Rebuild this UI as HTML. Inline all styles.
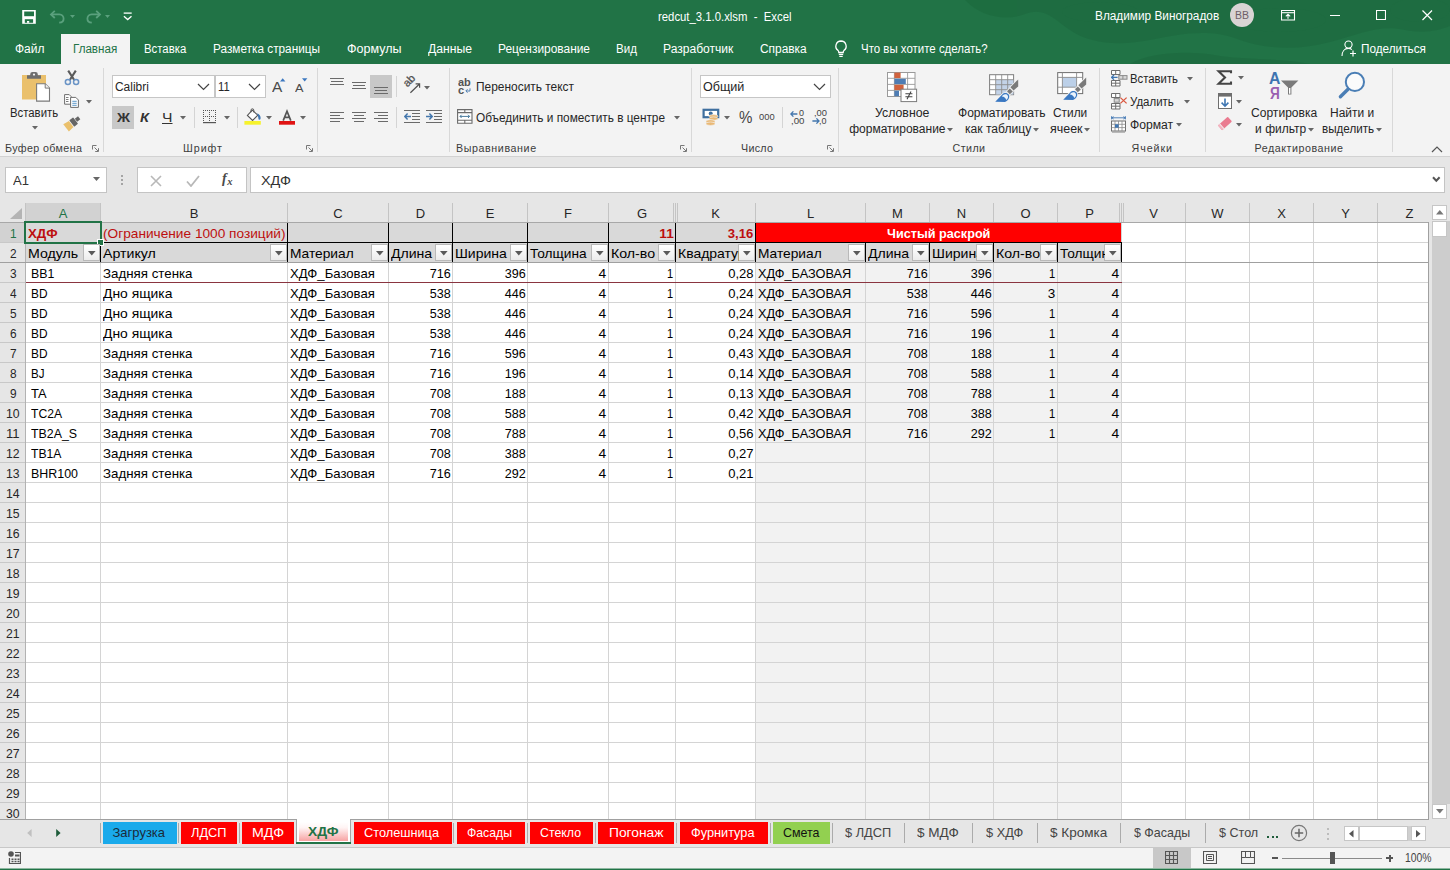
<!DOCTYPE html>
<html><head><meta charset="utf-8"><title>redcut_3.1.0.xlsm - Excel</title>
<style>
html,body{margin:0;padding:0;background:#fff;}
body{width:1450px;height:870px;overflow:hidden;position:relative;font-family:"Liberation Sans",sans-serif;}
#app{position:absolute;left:0;top:0;width:1450px;height:870px;overflow:hidden;background:#e6e6e6;}
#app div,#app svg,#app span.t{position:absolute;}
span.t{white-space:pre;}
</style></head><body><div id="app">
<div style="left:0px;top:0px;width:1450px;height:64px;background:#217346;"></div>
<svg style="left:950px;top:0" width="500" height="64" viewBox="0 0 500 64"><g fill="#1c673d" opacity="0.55"><path d="M15 0C30 16 55 22 75 14C95 6 105 20 120 30C140 44 170 46 200 40C230 34 260 28 290 40C320 50 350 50 380 42C410 34 430 24 455 30C475 34 490 30 500 26V0z"/><ellipse cx="150" cy="12" rx="38" ry="10"/><ellipse cx="330" cy="20" rx="46" ry="12"/><ellipse cx="470" cy="10" rx="30" ry="12"/><path d="M180 64C200 52 240 50 270 56C300 60 330 58 360 64z"/></g></svg>
<div style="left:61px;top:34px;width:69px;height:30px;background:#f3f3f3;"></div>
<div style="left:0px;top:64px;width:1450px;height:92px;background:#f3f3f3;"></div>
<div style="left:0px;top:156px;width:1450px;height:1px;background:#d2d2d2;"></div>
<div style="left:0px;top:157px;width:1450px;height:46px;background:#e6e6e6;"></div>
<div style="left:103px;top:68px;width:1px;height:84px;background:#d8d8d8;"></div>
<div style="left:317px;top:68px;width:1px;height:84px;background:#d8d8d8;"></div>
<div style="left:449px;top:68px;width:1px;height:84px;background:#d8d8d8;"></div>
<div style="left:691px;top:68px;width:1px;height:84px;background:#d8d8d8;"></div>
<div style="left:838px;top:68px;width:1px;height:84px;background:#d8d8d8;"></div>
<div style="left:1099px;top:68px;width:1px;height:84px;background:#d8d8d8;"></div>
<div style="left:1205px;top:68px;width:1px;height:84px;background:#d8d8d8;"></div>
<div style="left:1392px;top:68px;width:1px;height:84px;background:#d8d8d8;"></div>
<div style="left:194px;top:107px;width:1px;height:21px;background:#d4d4d4;"></div>
<div style="left:237px;top:107px;width:1px;height:21px;background:#d4d4d4;"></div>
<div style="left:396px;top:107px;width:1px;height:21px;background:#d4d4d4;"></div>
<div style="left:782px;top:107px;width:1px;height:21px;background:#d4d4d4;"></div>
<div style="left:396px;top:76px;width:1px;height:21px;background:#d4d4d4;"></div>
<div style="left:5px;top:167px;width:102px;height:26px;background:#fff;border:1px solid #c4c4c4;box-sizing:border-box;"></div>
<div style="left:137px;top:167px;width:110px;height:26px;background:#fff;border:1px solid #c4c4c4;box-sizing:border-box;"></div>
<div style="left:250px;top:167px;width:1195px;height:26px;background:#fff;border:1px solid #c4c4c4;box-sizing:border-box;"></div>
<svg style="left:93px;top:177px;" width="7" height="4" viewBox="0 0 7 4"><path d="M0 0h7L3.5 4z" fill="#666"/></svg>
<div style="left:121px;top:175px;width:2px;height:2px;background:#a4a4a4;"></div>
<div style="left:121px;top:179px;width:2px;height:2px;background:#a4a4a4;"></div>
<div style="left:121px;top:183px;width:2px;height:2px;background:#a4a4a4;"></div>
<svg style="left:150px;top:174.5px;" width="12" height="12" viewBox="0 0 12 12"><path d="M1 1L11 11M11 1L1 11" stroke="#b8b8b8" stroke-width="1.6" fill="none"/></svg>
<svg style="left:185.5px;top:174.5px;" width="14" height="12" viewBox="0 0 14 12"><path d="M1 6.5L5 11L13 1" stroke="#b8b8b8" stroke-width="1.8" fill="none"/></svg>
<svg style="left:1432px;top:176px;" width="9" height="7" viewBox="0 0 9 7"><path d="M1 1.2L4.3 4.8L7.6 1.2" stroke="#555" stroke-width="2" fill="none"/></svg>
<div style="left:26px;top:223px;width:1402px;height:596px;background:#fff;"></div>
<div style="left:0px;top:203px;width:1429px;height:19px;background:#e6e6e6;"></div>
<div style="left:0px;top:222px;width:25px;height:597px;background:#e6e6e6;"></div>
<div style="left:26px;top:203px;width:74px;height:19px;background:#d2d2d2;"></div>
<div style="left:0px;top:223px;width:25px;height:19px;background:#d2d2d2;"></div>
<div style="left:26px;top:223px;width:729px;height:39px;background:#d9d9d9;"></div>
<div style="left:756px;top:243px;width:365px;height:19px;background:#d9d9d9;"></div>
<div style="left:756px;top:263px;width:365px;height:556px;background:#f2f2f2;"></div>
<div style="left:26px;top:242px;width:1402px;height:1px;background:#d4d4d4;"></div>
<div style="left:0px;top:242px;width:25px;height:1px;background:#c8c8c8;"></div>
<div style="left:26px;top:262px;width:1402px;height:1px;background:#d4d4d4;"></div>
<div style="left:0px;top:262px;width:25px;height:1px;background:#c8c8c8;"></div>
<div style="left:26px;top:282px;width:1402px;height:1px;background:#d4d4d4;"></div>
<div style="left:0px;top:282px;width:25px;height:1px;background:#c8c8c8;"></div>
<div style="left:26px;top:302px;width:1402px;height:1px;background:#d4d4d4;"></div>
<div style="left:0px;top:302px;width:25px;height:1px;background:#c8c8c8;"></div>
<div style="left:26px;top:322px;width:1402px;height:1px;background:#d4d4d4;"></div>
<div style="left:0px;top:322px;width:25px;height:1px;background:#c8c8c8;"></div>
<div style="left:26px;top:342px;width:1402px;height:1px;background:#d4d4d4;"></div>
<div style="left:0px;top:342px;width:25px;height:1px;background:#c8c8c8;"></div>
<div style="left:26px;top:362px;width:1402px;height:1px;background:#d4d4d4;"></div>
<div style="left:0px;top:362px;width:25px;height:1px;background:#c8c8c8;"></div>
<div style="left:26px;top:382px;width:1402px;height:1px;background:#d4d4d4;"></div>
<div style="left:0px;top:382px;width:25px;height:1px;background:#c8c8c8;"></div>
<div style="left:26px;top:402px;width:1402px;height:1px;background:#d4d4d4;"></div>
<div style="left:0px;top:402px;width:25px;height:1px;background:#c8c8c8;"></div>
<div style="left:26px;top:422px;width:1402px;height:1px;background:#d4d4d4;"></div>
<div style="left:0px;top:422px;width:25px;height:1px;background:#c8c8c8;"></div>
<div style="left:26px;top:442px;width:1402px;height:1px;background:#d4d4d4;"></div>
<div style="left:0px;top:442px;width:25px;height:1px;background:#c8c8c8;"></div>
<div style="left:26px;top:462px;width:1402px;height:1px;background:#d4d4d4;"></div>
<div style="left:0px;top:462px;width:25px;height:1px;background:#c8c8c8;"></div>
<div style="left:26px;top:482px;width:1402px;height:1px;background:#d4d4d4;"></div>
<div style="left:0px;top:482px;width:25px;height:1px;background:#c8c8c8;"></div>
<div style="left:26px;top:502px;width:1402px;height:1px;background:#d4d4d4;"></div>
<div style="left:0px;top:502px;width:25px;height:1px;background:#c8c8c8;"></div>
<div style="left:26px;top:522px;width:1402px;height:1px;background:#d4d4d4;"></div>
<div style="left:0px;top:522px;width:25px;height:1px;background:#c8c8c8;"></div>
<div style="left:26px;top:542px;width:1402px;height:1px;background:#d4d4d4;"></div>
<div style="left:0px;top:542px;width:25px;height:1px;background:#c8c8c8;"></div>
<div style="left:26px;top:562px;width:1402px;height:1px;background:#d4d4d4;"></div>
<div style="left:0px;top:562px;width:25px;height:1px;background:#c8c8c8;"></div>
<div style="left:26px;top:582px;width:1402px;height:1px;background:#d4d4d4;"></div>
<div style="left:0px;top:582px;width:25px;height:1px;background:#c8c8c8;"></div>
<div style="left:26px;top:602px;width:1402px;height:1px;background:#d4d4d4;"></div>
<div style="left:0px;top:602px;width:25px;height:1px;background:#c8c8c8;"></div>
<div style="left:26px;top:622px;width:1402px;height:1px;background:#d4d4d4;"></div>
<div style="left:0px;top:622px;width:25px;height:1px;background:#c8c8c8;"></div>
<div style="left:26px;top:642px;width:1402px;height:1px;background:#d4d4d4;"></div>
<div style="left:0px;top:642px;width:25px;height:1px;background:#c8c8c8;"></div>
<div style="left:26px;top:662px;width:1402px;height:1px;background:#d4d4d4;"></div>
<div style="left:0px;top:662px;width:25px;height:1px;background:#c8c8c8;"></div>
<div style="left:26px;top:682px;width:1402px;height:1px;background:#d4d4d4;"></div>
<div style="left:0px;top:682px;width:25px;height:1px;background:#c8c8c8;"></div>
<div style="left:26px;top:702px;width:1402px;height:1px;background:#d4d4d4;"></div>
<div style="left:0px;top:702px;width:25px;height:1px;background:#c8c8c8;"></div>
<div style="left:26px;top:722px;width:1402px;height:1px;background:#d4d4d4;"></div>
<div style="left:0px;top:722px;width:25px;height:1px;background:#c8c8c8;"></div>
<div style="left:26px;top:742px;width:1402px;height:1px;background:#d4d4d4;"></div>
<div style="left:0px;top:742px;width:25px;height:1px;background:#c8c8c8;"></div>
<div style="left:26px;top:762px;width:1402px;height:1px;background:#d4d4d4;"></div>
<div style="left:0px;top:762px;width:25px;height:1px;background:#c8c8c8;"></div>
<div style="left:26px;top:782px;width:1402px;height:1px;background:#d4d4d4;"></div>
<div style="left:0px;top:782px;width:25px;height:1px;background:#c8c8c8;"></div>
<div style="left:26px;top:802px;width:1402px;height:1px;background:#d4d4d4;"></div>
<div style="left:0px;top:802px;width:25px;height:1px;background:#c8c8c8;"></div>
<div style="left:100px;top:223px;width:1px;height:596px;background:#d4d4d4;"></div>
<div style="left:287px;top:223px;width:1px;height:596px;background:#d4d4d4;"></div>
<div style="left:388px;top:223px;width:1px;height:596px;background:#d4d4d4;"></div>
<div style="left:452px;top:223px;width:1px;height:596px;background:#d4d4d4;"></div>
<div style="left:527px;top:223px;width:1px;height:596px;background:#d4d4d4;"></div>
<div style="left:608px;top:223px;width:1px;height:596px;background:#d4d4d4;"></div>
<div style="left:675px;top:223px;width:1px;height:596px;background:#d4d4d4;"></div>
<div style="left:755px;top:223px;width:1px;height:596px;background:#d4d4d4;"></div>
<div style="left:865px;top:223px;width:1px;height:596px;background:#d4d4d4;"></div>
<div style="left:929px;top:223px;width:1px;height:596px;background:#d4d4d4;"></div>
<div style="left:993px;top:223px;width:1px;height:596px;background:#d4d4d4;"></div>
<div style="left:1057px;top:223px;width:1px;height:596px;background:#d4d4d4;"></div>
<div style="left:1121px;top:223px;width:1px;height:596px;background:#d4d4d4;"></div>
<div style="left:1185px;top:223px;width:1px;height:596px;background:#d4d4d4;"></div>
<div style="left:1249px;top:223px;width:1px;height:596px;background:#d4d4d4;"></div>
<div style="left:1313px;top:223px;width:1px;height:596px;background:#d4d4d4;"></div>
<div style="left:1377px;top:223px;width:1px;height:596px;background:#d4d4d4;"></div>
<div style="left:100px;top:223px;width:1px;height:39px;background:#000;"></div>
<div style="left:287px;top:223px;width:1px;height:39px;background:#000;"></div>
<div style="left:388px;top:223px;width:1px;height:39px;background:#000;"></div>
<div style="left:452px;top:223px;width:1px;height:39px;background:#000;"></div>
<div style="left:527px;top:223px;width:1px;height:39px;background:#000;"></div>
<div style="left:608px;top:223px;width:1px;height:39px;background:#000;"></div>
<div style="left:675px;top:223px;width:1px;height:39px;background:#000;"></div>
<div style="left:755px;top:223px;width:1px;height:39px;background:#000;"></div>
<div style="left:865px;top:243px;width:1px;height:19px;background:#000;"></div>
<div style="left:929px;top:243px;width:1px;height:19px;background:#000;"></div>
<div style="left:993px;top:243px;width:1px;height:19px;background:#000;"></div>
<div style="left:1057px;top:243px;width:1px;height:19px;background:#000;"></div>
<div style="left:1121px;top:243px;width:1px;height:19px;background:#000;"></div>
<div style="left:755px;top:243px;width:1px;height:19px;background:#000;"></div>
<div style="left:756px;top:223px;width:365px;height:19px;background:#ff0000;"></div>
<div style="left:100px;top:242px;width:1022px;height:1px;background:#000;"></div>
<div style="left:100px;top:203px;width:1px;height:19px;background:#c4c4c4;"></div>
<div style="left:287px;top:203px;width:1px;height:19px;background:#c4c4c4;"></div>
<div style="left:388px;top:203px;width:1px;height:19px;background:#c4c4c4;"></div>
<div style="left:452px;top:203px;width:1px;height:19px;background:#c4c4c4;"></div>
<div style="left:527px;top:203px;width:1px;height:19px;background:#c4c4c4;"></div>
<div style="left:608px;top:203px;width:1px;height:19px;background:#c4c4c4;"></div>
<div style="left:675px;top:203px;width:1px;height:19px;background:#c4c4c4;"></div>
<div style="left:755px;top:203px;width:1px;height:19px;background:#c4c4c4;"></div>
<div style="left:865px;top:203px;width:1px;height:19px;background:#c4c4c4;"></div>
<div style="left:929px;top:203px;width:1px;height:19px;background:#c4c4c4;"></div>
<div style="left:993px;top:203px;width:1px;height:19px;background:#c4c4c4;"></div>
<div style="left:1057px;top:203px;width:1px;height:19px;background:#c4c4c4;"></div>
<div style="left:1121px;top:203px;width:1px;height:19px;background:#c4c4c4;"></div>
<div style="left:1185px;top:203px;width:1px;height:19px;background:#c4c4c4;"></div>
<div style="left:1249px;top:203px;width:1px;height:19px;background:#c4c4c4;"></div>
<div style="left:1313px;top:203px;width:1px;height:19px;background:#c4c4c4;"></div>
<div style="left:1377px;top:203px;width:1px;height:19px;background:#c4c4c4;"></div>
<div style="left:673px;top:203px;width:1px;height:19px;background:#c4c4c4;"></div>
<div style="left:677px;top:203px;width:1px;height:19px;background:#c4c4c4;"></div>
<div style="left:1119px;top:203px;width:1px;height:19px;background:#c4c4c4;"></div>
<div style="left:1123px;top:203px;width:1px;height:19px;background:#c4c4c4;"></div>
<div style="left:25px;top:222px;width:1px;height:597px;background:#b2b2b2;"></div>
<div style="left:25px;top:203px;width:1px;height:19px;background:#c4c4c4;"></div>
<div style="left:0px;top:222px;width:1429px;height:1px;background:#a8a8a8;"></div>
<div style="left:26px;top:221px;width:74px;height:2px;background:#217346;"></div>
<div style="left:24px;top:223px;width:2px;height:19px;background:#217346;"></div>
<div style="left:1428px;top:222px;width:1px;height:597px;background:#a0a0a0;"></div>
<div style="left:0px;top:819px;width:1429px;height:1px;background:#a0a0a0;"></div>
<div style="left:0px;top:262px;width:1428px;height:1px;background:#a0a0a0;"></div>
<div style="left:26px;top:282px;width:1096px;height:1px;background:#8a3540;"></div>
<svg style="left:10px;top:208px;" width="13" height="12" viewBox="0 0 13 12"><path d="M12 0V11H0z" fill="#b4b4b4"/></svg>
<div style="left:24px;top:221px;width:78px;height:23px;border:2px solid #217346;box-sizing:border-box;"></div>
<div style="left:97px;top:239px;width:7px;height:7px;background:#fff;"></div>
<div style="left:98px;top:240px;width:5px;height:5px;background:#217346;"></div>
<div style="left:83px;top:244px;width:17px;height:17px;background:linear-gradient(#ffffff,#ececec);border:1px solid #b9b9b9;box-sizing:border-box;"></div>
<svg style="left:88px;top:251px;" width="8" height="5" viewBox="0 0 8 5"><path d="M0 0h7.6L3.8 4.4z" fill="#5a5a5a"/></svg>
<div style="left:270px;top:244px;width:17px;height:17px;background:linear-gradient(#ffffff,#ececec);border:1px solid #b9b9b9;box-sizing:border-box;"></div>
<svg style="left:275px;top:251px;" width="8" height="5" viewBox="0 0 8 5"><path d="M0 0h7.6L3.8 4.4z" fill="#5a5a5a"/></svg>
<div style="left:371px;top:244px;width:17px;height:17px;background:linear-gradient(#ffffff,#ececec);border:1px solid #b9b9b9;box-sizing:border-box;"></div>
<svg style="left:376px;top:251px;" width="8" height="5" viewBox="0 0 8 5"><path d="M0 0h7.6L3.8 4.4z" fill="#5a5a5a"/></svg>
<div style="left:435px;top:244px;width:17px;height:17px;background:linear-gradient(#ffffff,#ececec);border:1px solid #b9b9b9;box-sizing:border-box;"></div>
<svg style="left:440px;top:251px;" width="8" height="5" viewBox="0 0 8 5"><path d="M0 0h7.6L3.8 4.4z" fill="#5a5a5a"/></svg>
<div style="left:510px;top:244px;width:17px;height:17px;background:linear-gradient(#ffffff,#ececec);border:1px solid #b9b9b9;box-sizing:border-box;"></div>
<svg style="left:515px;top:251px;" width="8" height="5" viewBox="0 0 8 5"><path d="M0 0h7.6L3.8 4.4z" fill="#5a5a5a"/></svg>
<div style="left:591px;top:244px;width:17px;height:17px;background:linear-gradient(#ffffff,#ececec);border:1px solid #b9b9b9;box-sizing:border-box;"></div>
<svg style="left:596px;top:251px;" width="8" height="5" viewBox="0 0 8 5"><path d="M0 0h7.6L3.8 4.4z" fill="#5a5a5a"/></svg>
<div style="left:658px;top:244px;width:17px;height:17px;background:linear-gradient(#ffffff,#ececec);border:1px solid #b9b9b9;box-sizing:border-box;"></div>
<svg style="left:663px;top:251px;" width="8" height="5" viewBox="0 0 8 5"><path d="M0 0h7.6L3.8 4.4z" fill="#5a5a5a"/></svg>
<div style="left:738px;top:244px;width:17px;height:17px;background:linear-gradient(#ffffff,#ececec);border:1px solid #b9b9b9;box-sizing:border-box;"></div>
<svg style="left:743px;top:251px;" width="8" height="5" viewBox="0 0 8 5"><path d="M0 0h7.6L3.8 4.4z" fill="#5a5a5a"/></svg>
<div style="left:848px;top:244px;width:17px;height:17px;background:linear-gradient(#ffffff,#ececec);border:1px solid #b9b9b9;box-sizing:border-box;"></div>
<svg style="left:853px;top:251px;" width="8" height="5" viewBox="0 0 8 5"><path d="M0 0h7.6L3.8 4.4z" fill="#5a5a5a"/></svg>
<div style="left:912px;top:244px;width:17px;height:17px;background:linear-gradient(#ffffff,#ececec);border:1px solid #b9b9b9;box-sizing:border-box;"></div>
<svg style="left:917px;top:251px;" width="8" height="5" viewBox="0 0 8 5"><path d="M0 0h7.6L3.8 4.4z" fill="#5a5a5a"/></svg>
<div style="left:976px;top:244px;width:17px;height:17px;background:linear-gradient(#ffffff,#ececec);border:1px solid #b9b9b9;box-sizing:border-box;"></div>
<svg style="left:981px;top:251px;" width="8" height="5" viewBox="0 0 8 5"><path d="M0 0h7.6L3.8 4.4z" fill="#5a5a5a"/></svg>
<div style="left:1040px;top:244px;width:17px;height:17px;background:linear-gradient(#ffffff,#ececec);border:1px solid #b9b9b9;box-sizing:border-box;"></div>
<svg style="left:1045px;top:251px;" width="8" height="5" viewBox="0 0 8 5"><path d="M0 0h7.6L3.8 4.4z" fill="#5a5a5a"/></svg>
<div style="left:1104px;top:244px;width:17px;height:17px;background:linear-gradient(#ffffff,#ececec);border:1px solid #b9b9b9;box-sizing:border-box;"></div>
<svg style="left:1109px;top:251px;" width="8" height="5" viewBox="0 0 8 5"><path d="M0 0h7.6L3.8 4.4z" fill="#5a5a5a"/></svg>
<div style="left:1429px;top:203px;width:21px;height:617px;background:#e6e6e6;"></div>
<div style="left:1432px;top:221px;width:18px;height:583px;background:#cdcdcd;"></div>
<div style="left:1432px;top:205px;width:15px;height:15px;background:#fff;border:1px solid #c6c6c6;box-sizing:border-box;"></div>
<svg style="left:1436px;top:210px;" width="8" height="5" viewBox="0 0 8 5"><path d="M0 4.5h7.6L3.8 0z" fill="#777"/></svg>
<div style="left:1432px;top:221px;width:15px;height:16px;background:#fff;border:1px solid #c6c6c6;box-sizing:border-box;"></div>
<div style="left:1432px;top:804px;width:15px;height:15px;background:#fff;border:1px solid #c6c6c6;box-sizing:border-box;"></div>
<svg style="left:1436px;top:809px;" width="8" height="5" viewBox="0 0 8 5"><path d="M0 0h7.6L3.8 4.5z" fill="#777"/></svg>
<div style="left:0px;top:820px;width:1450px;height:27px;background:#e6e6e6;"></div>
<div style="left:0px;top:847px;width:1450px;height:1px;background:#c8c8c8;"></div>
<svg style="left:27px;top:828.5px;" width="5" height="8" viewBox="0 0 5 8"><path d="M4.6 0V8L0.2 4z" fill="#c0c0c0"/></svg>
<svg style="left:55.5px;top:828.5px;" width="5" height="8" viewBox="0 0 5 8"><path d="M0.2 0V8L4.6 4z" fill="#1e5c3a"/></svg>
<div style="left:100px;top:823px;width:1px;height:20px;background:#ababab;"></div>
<div style="left:103px;top:822px;width:73.5px;height:22px;background:#1aaaeb;"></div>
<div style="left:178px;top:823px;width:1px;height:20px;background:#ababab;"></div>
<div style="left:181px;top:822px;width:56px;height:22px;background:#ff0000;"></div>
<div style="left:239px;top:823px;width:1px;height:20px;background:#ababab;"></div>
<div style="left:242px;top:822px;width:52px;height:22px;background:#ff0000;"></div>
<div style="left:297px;top:819px;width:53px;height:23px;background:#fff;"></div>
<div style="left:296px;top:820px;width:1px;height:24px;background:#a6a6a6;"></div>
<div style="left:350px;top:820px;width:1px;height:24px;background:#a6a6a6;"></div>
<div style="left:299px;top:822px;width:49px;height:19px;background:linear-gradient(#ffffff 0%,#fff4f4 30%,#f7a3a3 100%);"></div>
<div style="left:296px;top:842px;width:55px;height:2px;background:#217346;"></div>
<div style="left:353.5px;top:822px;width:98.0px;height:22px;background:#ff0000;"></div>
<div style="left:453px;top:823px;width:1px;height:20px;background:#ababab;"></div>
<div style="left:456.5px;top:822px;width:68.79999999999995px;height:22px;background:#ff0000;"></div>
<div style="left:527px;top:823px;width:1px;height:20px;background:#ababab;"></div>
<div style="left:530px;top:822px;width:63px;height:22px;background:#ff0000;"></div>
<div style="left:595px;top:823px;width:1px;height:20px;background:#ababab;"></div>
<div style="left:598.3px;top:822px;width:75.70000000000005px;height:22px;background:#ff0000;"></div>
<div style="left:676px;top:823px;width:1px;height:20px;background:#ababab;"></div>
<div style="left:679.5px;top:822px;width:88.5px;height:22px;background:#ff0000;"></div>
<div style="left:770px;top:823px;width:1px;height:20px;background:#ababab;"></div>
<div style="left:773px;top:822px;width:57px;height:22px;background:#92d050;"></div>
<div style="left:832px;top:823px;width:1px;height:20px;background:#ababab;"></div>
<div style="left:904px;top:823px;width:1px;height:20px;background:#ababab;"></div>
<div style="left:972px;top:823px;width:1px;height:20px;background:#ababab;"></div>
<div style="left:1037px;top:823px;width:1px;height:20px;background:#ababab;"></div>
<div style="left:1120px;top:823px;width:1px;height:20px;background:#ababab;"></div>
<div style="left:1205px;top:823px;width:1px;height:20px;background:#ababab;"></div>
<div style="left:1267px;top:836px;width:2px;height:2px;background:#1e5c3a;"></div>
<div style="left:1271.5px;top:836px;width:2px;height:2px;background:#1e5c3a;"></div>
<div style="left:1276px;top:836px;width:2px;height:2px;background:#1e5c3a;"></div>
<svg style="left:1290px;top:824px;" width="18" height="18" viewBox="0 0 18 18"><circle cx="9" cy="9" r="7.6" fill="none" stroke="#777" stroke-width="1.2"/><path d="M9 4.8V13.2M4.8 9H13.2" stroke="#666" stroke-width="1.5"/></svg>
<div style="left:1327px;top:828px;width:2px;height:2px;background:#bcbcbc;"></div>
<div style="left:1327px;top:833px;width:2px;height:2px;background:#bcbcbc;"></div>
<div style="left:1327px;top:838px;width:2px;height:2px;background:#bcbcbc;"></div>
<div style="left:1344px;top:826px;width:82px;height:15px;background:#cfcfcf;"></div>
<div style="left:1344px;top:826px;width:15px;height:15px;background:#fff;border:1px solid #c6c6c6;box-sizing:border-box;"></div>
<svg style="left:1349px;top:830px;" width="5" height="8" viewBox="0 0 5 8"><path d="M4.5 0V7.6L0 3.8z" fill="#555"/></svg>
<div style="left:1359px;top:826px;width:49px;height:15px;background:#fff;border:1px solid #c6c6c6;box-sizing:border-box;"></div>
<div style="left:1411px;top:826px;width:15px;height:15px;background:#fff;border:1px solid #c6c6c6;box-sizing:border-box;"></div>
<svg style="left:1416px;top:830px;" width="5" height="8" viewBox="0 0 5 8"><path d="M0 0V7.6L4.5 3.8z" fill="#555"/></svg>
<div style="left:0px;top:848px;width:1450px;height:20px;background:#f3f3f3;"></div>
<div style="left:0px;top:868px;width:1450px;height:1px;background:#8fb7a1;"></div>
<div style="left:0px;top:869px;width:1450px;height:1px;background:#217346;"></div>
<svg style="left:8px;top:851px;" width="13" height="13" viewBox="0 0 13 13"><circle cx="3" cy="3" r="2.8" fill="#555"/><path d="M7 1.5h5.5v11h-11V7" fill="none" stroke="#555" stroke-width="1.2"/><path d="M3.5 7.5h2v1.4h-2zM6.5 7.5h2v1.4h-2zM9.5 7.5h2v1.4h-2zM3.5 9.8h2v1.4h-2zM6.5 9.8h2v1.4h-2zM9.5 9.8h2v1.4h-2zM7 3.5h4.5v2H7z" fill="#555"/></svg>
<div style="left:1153px;top:848px;width:38px;height:20px;background:#c8c8c8;"></div>
<svg style="left:1165px;top:851px;" width="13" height="13" viewBox="0 0 13 13"><path d="M0.5 0.5h12v12h-12zM4.5 0.5v12M8.5 0.5v12M0.5 4.5h12M0.5 8.5h12" fill="none" stroke="#555" stroke-width="1.1"/></svg>
<svg style="left:1203px;top:851px;" width="14" height="13" viewBox="0 0 14 13"><path d="M0.5 0.5h13v12h-13z" fill="none" stroke="#555" stroke-width="1.1"/><path d="M3.5 3.5h7v6h-7zM5 5.5h4M5 7.5h4" fill="none" stroke="#555" stroke-width="1"/></svg>
<svg style="left:1241px;top:851px;" width="14" height="13" viewBox="0 0 14 13"><path d="M0.5 0.5h13v12h-13z" fill="none" stroke="#555" stroke-width="1.1"/><path d="M4.5 0.5v6h5v-6M0.5 6.5h4M9.5 6.5h4" fill="none" stroke="#555" stroke-width="1"/></svg>
<div style="left:1272px;top:857px;width:6px;height:2px;background:#555;"></div>
<div style="left:1282px;top:858px;width:100px;height:1px;background:#8a8a8a;"></div>
<div style="left:1330px;top:852px;width:5px;height:12px;background:#555;"></div>
<div style="left:1386px;top:857px;width:7px;height:2px;background:#555;"></div>
<div style="left:1388.5px;top:854.5px;width:2px;height:7px;background:#555;"></div>
<svg style="left:1230px;top:3px;" width="24" height="24" viewBox="0 0 24 24"><circle cx="12" cy="12" r="12" fill="#d9d4d4"/></svg>
<svg style="left:22px;top:10px;" width="14" height="14" viewBox="0 0 14 14"><path d="M0.2 0h13.6v13.8H0.2z" fill="#fff"/><path d="M2.2 1.5h9.8v4.7H2.2z" fill="#217346"/><path d="M2.8 9.2h8.3v3.6H2.8z" fill="#217346"/><path d="M5 11h2.2v1.8H5z" fill="#fff"/></svg>
<svg style="left:49px;top:9px;" width="18" height="15" viewBox="0 0 18 15"><path d="M2.2 5.4h8.2a4.3 4.3 0 0 1 4.2 4.3c0 2-1.6 3.8-4.4 4" fill="none" stroke="#5aa07d" stroke-width="1.8"/><path d="M5.8 1.8L2 5.4L5.8 9" fill="none" stroke="#5aa07d" stroke-width="1.8"/></svg>
<svg style="left:70px;top:15px;" width="6" height="4" viewBox="0 0 6 4"><path d="M0 0h5L2.5 3z" fill="#5aa07d"/></svg>
<svg style="left:84px;top:9px;" width="18" height="15" viewBox="0 0 18 15"><path d="M15.8 5.4H7.6a4.3 4.3 0 0 0-4.2 4.3c0 2 1.6 3.8 4.4 4" fill="none" stroke="#5aa07d" stroke-width="1.8"/><path d="M12.2 1.8L16 5.4L12.2 9" fill="none" stroke="#5aa07d" stroke-width="1.8"/></svg>
<svg style="left:105px;top:15px;" width="6" height="4" viewBox="0 0 6 4"><path d="M0 0h5L2.5 3z" fill="#5aa07d"/></svg>
<svg style="left:123px;top:12px;" width="10" height="9" viewBox="0 0 10 9"><path d="M0.7 1.1h8" stroke="#fff" stroke-width="1.3"/><path d="M0.9 4.2L4.7 7.6L8.5 4.2" fill="none" stroke="#fff" stroke-width="1.3"/></svg>
<svg style="left:1281px;top:10px;" width="15" height="11" viewBox="0 0 15 11"><path d="M0.5 0.5h13v9.5h-13z" fill="none" stroke="#fff" stroke-width="1.1"/><path d="M0.5 2.7h13" stroke="#fff" stroke-width="1.1"/><path d="M7 8.8V4.3M4.8 6.3L7 4.2L9.2 6.3" fill="none" stroke="#fff" stroke-width="1.1"/></svg>
<div style="left:1330px;top:15px;width:10px;height:1px;background:#fff;"></div>
<svg style="left:1376px;top:10px;" width="10" height="10" viewBox="0 0 10 10"><path d="M0.5 0.5h9v9h-9z" fill="none" stroke="#fff" stroke-width="1.1"/></svg>
<svg style="left:1422px;top:10px;" width="11" height="11" viewBox="0 0 11 11"><path d="M0.5 0.5L10 10M10 0.5L0.5 10" stroke="#fff" stroke-width="1.2" fill="none"/></svg>
<svg style="left:834px;top:40px;" width="14" height="18" viewBox="0 0 14 18"><path d="M7 1a5.2 5.2 0 0 1 3 9.4c-.6.6-.8 1.2-.8 2.1H4.8c0-.9-.2-1.5-.8-2.1A5.2 5.2 0 0 1 7 1z" fill="none" stroke="#fff" stroke-width="1.3"/><path d="M4.8 14.3h4.4M5.3 16.3h3.4" stroke="#fff" stroke-width="1.2"/></svg>
<svg style="left:1341px;top:40px;" width="16" height="17" viewBox="0 0 16 17"><circle cx="7.5" cy="4.6" r="3.6" fill="none" stroke="#fff" stroke-width="1.1"/><path d="M1 16c0-4.5 2.6-7.6 6.3-7.6c1.6 0 2.6.4 3.6 1.2" fill="none" stroke="#fff" stroke-width="1.1"/><path d="M12 10.5v6M9 13.5h6" stroke="#fff" stroke-width="1.2"/></svg>
<svg style="left:92px;top:145px;" width="7" height="7" viewBox="0 0 7 7"><path d="M0.5 4.5V0.5H4.5" fill="none" stroke="#777" stroke-width="1"/><path d="M2.5 2.5L6 6M6.5 3.2V6.5H3.2" fill="none" stroke="#777" stroke-width="1"/></svg>
<svg style="left:306px;top:145px;" width="7" height="7" viewBox="0 0 7 7"><path d="M0.5 4.5V0.5H4.5" fill="none" stroke="#777" stroke-width="1"/><path d="M2.5 2.5L6 6M6.5 3.2V6.5H3.2" fill="none" stroke="#777" stroke-width="1"/></svg>
<svg style="left:680px;top:145px;" width="7" height="7" viewBox="0 0 7 7"><path d="M0.5 4.5V0.5H4.5" fill="none" stroke="#777" stroke-width="1"/><path d="M2.5 2.5L6 6M6.5 3.2V6.5H3.2" fill="none" stroke="#777" stroke-width="1"/></svg>
<svg style="left:827px;top:145px;" width="7" height="7" viewBox="0 0 7 7"><path d="M0.5 4.5V0.5H4.5" fill="none" stroke="#777" stroke-width="1"/><path d="M2.5 2.5L6 6M6.5 3.2V6.5H3.2" fill="none" stroke="#777" stroke-width="1"/></svg>
<svg style="left:1431px;top:146px;" width="12" height="7" viewBox="0 0 12 7"><path d="M1 6L6 1L11 6" fill="none" stroke="#555" stroke-width="1.2"/></svg>
<svg style="left:32px;top:126px;" width="6" height="4" viewBox="0 0 6 4"><path d="M0 0h6L3 3.4z" fill="#666"/></svg>
<svg style="left:86px;top:100px;" width="6" height="4" viewBox="0 0 6 4"><path d="M0 0h6L3 3.4z" fill="#666"/></svg>
<div style="left:112px;top:75px;width:103px;height:23px;background:#fff;border:1px solid #c6c6c6;box-sizing:border-box;"></div>
<div style="left:215px;top:75px;width:51px;height:23px;background:#fff;border:1px solid #c6c6c6;box-sizing:border-box;"></div>
<svg style="left:197px;top:83px;" width="13" height="8" viewBox="0 0 13 8"><path d="M1 1L6.5 6.5L12 1" fill="none" stroke="#444" stroke-width="1.2"/></svg>
<svg style="left:248px;top:83px;" width="13" height="8" viewBox="0 0 13 8"><path d="M1 1L6.5 6.5L12 1" fill="none" stroke="#444" stroke-width="1.2"/></svg>
<div style="left:112px;top:106px;width:22px;height:23px;background:#c8c8c8;"></div>
<svg style="left:180px;top:116px;" width="6" height="4" viewBox="0 0 6 4"><path d="M0 0h6L3 3.4z" fill="#666"/></svg>
<svg style="left:224px;top:116px;" width="6" height="4" viewBox="0 0 6 4"><path d="M0 0h6L3 3.4z" fill="#666"/></svg>
<svg style="left:266px;top:116px;" width="6" height="4" viewBox="0 0 6 4"><path d="M0 0h6L3 3.4z" fill="#666"/></svg>
<svg style="left:300px;top:116px;" width="6" height="4" viewBox="0 0 6 4"><path d="M0 0h6L3 3.4z" fill="#666"/></svg>
<svg style="left:280px;top:78px;" width="6" height="4" viewBox="0 0 6 4"><path d="M0 3.6h5.4L2.7 0.2z" fill="#3c78c0"/></svg>
<svg style="left:302px;top:78px;" width="6" height="4" viewBox="0 0 6 4"><path d="M0 0.2h5.4L2.7 3.6z" fill="#3c78c0"/></svg>
<div style="left:370px;top:75px;width:22px;height:23px;background:#c8c8c8;"></div>
<svg style="left:674px;top:116px;" width="6" height="4" viewBox="0 0 6 4"><path d="M0 0h6L3 3.4z" fill="#666"/></svg>
<svg style="left:424px;top:86px;" width="6" height="4" viewBox="0 0 6 4"><path d="M0 0h6L3 3.4z" fill="#666"/></svg>
<div style="left:700px;top:75px;width:131px;height:23px;background:#fff;border:1px solid #c6c6c6;box-sizing:border-box;"></div>
<svg style="left:813px;top:83px;" width="13" height="8" viewBox="0 0 13 8"><path d="M1 1L6.5 6.5L12 1" fill="none" stroke="#444" stroke-width="1.2"/></svg>
<svg style="left:724px;top:116px;" width="6" height="4" viewBox="0 0 6 4"><path d="M0 0h6L3 3.4z" fill="#666"/></svg>
<svg style="left:947px;top:128px;" width="6" height="4" viewBox="0 0 6 4"><path d="M0 0h6L3 3.4z" fill="#666"/></svg>
<svg style="left:1033px;top:128px;" width="6" height="4" viewBox="0 0 6 4"><path d="M0 0h6L3 3.4z" fill="#666"/></svg>
<svg style="left:1084px;top:128px;" width="6" height="4" viewBox="0 0 6 4"><path d="M0 0h6L3 3.4z" fill="#666"/></svg>
<svg style="left:1308px;top:128px;" width="6" height="4" viewBox="0 0 6 4"><path d="M0 0h6L3 3.4z" fill="#666"/></svg>
<svg style="left:1376px;top:128px;" width="6" height="4" viewBox="0 0 6 4"><path d="M0 0h6L3 3.4z" fill="#666"/></svg>
<svg style="left:1187px;top:77px;" width="6" height="4" viewBox="0 0 6 4"><path d="M0 0h6L3 3.4z" fill="#666"/></svg>
<svg style="left:1184px;top:100px;" width="6" height="4" viewBox="0 0 6 4"><path d="M0 0h6L3 3.4z" fill="#666"/></svg>
<svg style="left:1176px;top:123px;" width="6" height="4" viewBox="0 0 6 4"><path d="M0 0h6L3 3.4z" fill="#666"/></svg>
<svg style="left:1238px;top:76px;" width="6" height="4" viewBox="0 0 6 4"><path d="M0 0h6L3 3.4z" fill="#666"/></svg>
<svg style="left:1236px;top:100px;" width="6" height="4" viewBox="0 0 6 4"><path d="M0 0h6L3 3.4z" fill="#666"/></svg>
<svg style="left:1236px;top:123px;" width="6" height="4" viewBox="0 0 6 4"><path d="M0 0h6L3 3.4z" fill="#666"/></svg>
<svg style="left:20px;top:70px;" width="32" height="34" viewBox="0 0 32 34"><path d="M2 5h24v24.5H2z" fill="#eac06c"/><path d="M7 5.2V8.8h14V5.2h-3.2V4.2a2.3 2.3 0 0 0-2.3-2.3h-3a2.3 2.3 0 0 0-2.3 2.3v1z" fill="#6e6e6e"/><circle cx="14" cy="4.6" r="1.1" fill="#f3f3f3"/><path d="M16.6 13.8h8.6l4.3 4.3v13H16.6z" fill="#fff" stroke="#7a7a7a" stroke-width="1.1"/><path d="M25.2 13.8v4.3h4.3" fill="#f0f0f0" stroke="#7a7a7a" stroke-width="1"/></svg>
<svg style="left:64px;top:70px;" width="16" height="16" viewBox="0 0 16 16"><path d="M4.2 0.6L10.4 10.2M11.8 0.6L5.6 10.2" stroke="#5a5a5a" stroke-width="2.1" fill="none"/><circle cx="3.9" cy="12" r="2.55" fill="none" stroke="#6a94c6" stroke-width="1.5"/><circle cx="12.1" cy="12" r="2.55" fill="none" stroke="#6a94c6" stroke-width="1.5"/></svg>
<svg style="left:64px;top:94px;" width="16" height="14" viewBox="0 0 16 14"><path d="M0.6 0.6h4.6l2 2v7.6H0.6z" fill="#fff" stroke="#6e6e6e" stroke-width="1"/><path d="M2 3.5h2.5M2 5.5h2.5M2 7.5h2.5" stroke="#6e6e6e" stroke-width="0.9"/><path d="M6.6 3.4h5.2l2.6 2.6v7.4H6.6z" fill="#fff" stroke="#6e6e6e" stroke-width="1"/><path d="M8.3 7.3h4.4M8.3 9.3h4.4M8.3 11.3h4.4" stroke="#4a8bc2" stroke-width="0.9"/></svg>
<svg style="left:61px;top:112px;" width="24" height="24" viewBox="0 0 24 24"><g transform="translate(3,3.2) rotate(-38 9 8)"><rect x="13.2" y="5.6" width="4" height="3.8" fill="#666"/><rect x="7.8" y="3.5" width="4.8" height="8" rx="0.5" fill="#666"/><path d="M7.1 3.8L0.6 2.9v9.2l6.5-0.9z" fill="#eac06c"/></g></svg>
<svg style="left:203px;top:110px;" width="14" height="14" viewBox="0 0 14 14"><rect x="0" y="0" width="1" height="1" fill="#555"/><rect x="2" y="0" width="1" height="1" fill="#555"/><rect x="4" y="0" width="1" height="1" fill="#555"/><rect x="6" y="0" width="1" height="1" fill="#555"/><rect x="8" y="0" width="1" height="1" fill="#555"/><rect x="10" y="0" width="1" height="1" fill="#555"/><rect x="12" y="0" width="1" height="1" fill="#555"/><rect x="0" y="6" width="1" height="1" fill="#555"/><rect x="2" y="6" width="1" height="1" fill="#555"/><rect x="4" y="6" width="1" height="1" fill="#555"/><rect x="6" y="6" width="1" height="1" fill="#555"/><rect x="8" y="6" width="1" height="1" fill="#555"/><rect x="10" y="6" width="1" height="1" fill="#555"/><rect x="12" y="6" width="1" height="1" fill="#555"/><rect x="0" y="0" width="1" height="1" fill="#555"/><rect x="0" y="2" width="1" height="1" fill="#555"/><rect x="0" y="4" width="1" height="1" fill="#555"/><rect x="0" y="6" width="1" height="1" fill="#555"/><rect x="0" y="8" width="1" height="1" fill="#555"/><rect x="0" y="10" width="1" height="1" fill="#555"/><rect x="6" y="0" width="1" height="1" fill="#555"/><rect x="6" y="2" width="1" height="1" fill="#555"/><rect x="6" y="4" width="1" height="1" fill="#555"/><rect x="6" y="6" width="1" height="1" fill="#555"/><rect x="6" y="8" width="1" height="1" fill="#555"/><rect x="6" y="10" width="1" height="1" fill="#555"/><rect x="12" y="0" width="1" height="1" fill="#555"/><rect x="12" y="2" width="1" height="1" fill="#555"/><rect x="12" y="4" width="1" height="1" fill="#555"/><rect x="12" y="6" width="1" height="1" fill="#555"/><rect x="12" y="8" width="1" height="1" fill="#555"/><rect x="12" y="10" width="1" height="1" fill="#555"/><rect x="0" y="12" width="13" height="1.2" fill="#555"/></svg>
<svg style="left:244px;top:108px;" width="18" height="18" viewBox="0 0 18 18"><path d="M8.3 2.2L3.4 7.4L8.6 12.4L13.8 7.2L8.3 2.2z" fill="#fff" stroke="#555" stroke-width="1.1"/><path d="M7 4.2V2.2a1.4 1.4 0 0 1 2.8 0V4.4" fill="none" stroke="#555" stroke-width="1"/><path d="M13.2 5.2c2.4 1 3.8 3.2 3.4 5.4c-.3 1.5-1.8 1.5-2.1.3L13.9 7.4z" fill="#3f76b2"/><rect x="0.4" y="13" width="16.4" height="3.7" fill="#f6f22d"/></svg>
<svg style="left:279px;top:108px;" width="17" height="18" viewBox="0 0 17 18"><path d="M4.2 12.6L8 3.2L11.8 12.6M5.6 9.4h4.8" fill="none" stroke="#555" stroke-width="1.7"/><rect x="0" y="13" width="16" height="3.7" fill="#e01313"/></svg>
<div style="left:330px;top:78px;width:14px;height:1px;background:#6a6a6a;"></div>
<div style="left:331px;top:81px;width:12px;height:1px;background:#6a6a6a;"></div>
<div style="left:330px;top:84px;width:14px;height:1px;background:#6a6a6a;"></div>
<div style="left:352px;top:82px;width:14px;height:1px;background:#6a6a6a;"></div>
<div style="left:353px;top:85px;width:12px;height:1px;background:#6a6a6a;"></div>
<div style="left:352px;top:88px;width:14px;height:1px;background:#6a6a6a;"></div>
<div style="left:374px;top:87px;width:14px;height:1px;background:#6a6a6a;"></div>
<div style="left:375px;top:90px;width:12px;height:1px;background:#6a6a6a;"></div>
<div style="left:374px;top:93px;width:14px;height:1px;background:#6a6a6a;"></div>
<div style="left:330px;top:112px;width:14px;height:1px;background:#6a6a6a;"></div>
<div style="left:330px;top:115px;width:10px;height:1px;background:#6a6a6a;"></div>
<div style="left:330px;top:118px;width:14px;height:1px;background:#6a6a6a;"></div>
<div style="left:330px;top:121px;width:10px;height:1px;background:#6a6a6a;"></div>
<div style="left:352px;top:112px;width:14px;height:1px;background:#6a6a6a;"></div>
<div style="left:354px;top:115px;width:10px;height:1px;background:#6a6a6a;"></div>
<div style="left:352px;top:118px;width:14px;height:1px;background:#6a6a6a;"></div>
<div style="left:354px;top:121px;width:10px;height:1px;background:#6a6a6a;"></div>
<div style="left:374px;top:112px;width:14px;height:1px;background:#6a6a6a;"></div>
<div style="left:378px;top:115px;width:10px;height:1px;background:#6a6a6a;"></div>
<div style="left:374px;top:118px;width:14px;height:1px;background:#6a6a6a;"></div>
<div style="left:378px;top:121px;width:10px;height:1px;background:#6a6a6a;"></div>
<div style="left:404px;top:110px;width:16px;height:1px;background:#6a6a6a;"></div>
<div style="left:412px;top:113px;width:8px;height:1px;background:#6a6a6a;"></div>
<div style="left:412px;top:116px;width:8px;height:1px;background:#6a6a6a;"></div>
<div style="left:412px;top:119px;width:8px;height:1px;background:#6a6a6a;"></div>
<div style="left:404px;top:122px;width:16px;height:1px;background:#6a6a6a;"></div>
<svg style="left:404px;top:113px;" width="8" height="8" viewBox="0 0 8 8"><path d="M7 3.5H1M3.6 0.6L0.8 3.5L3.6 6.4" fill="none" stroke="#4477ad" stroke-width="1.5"/></svg>
<div style="left:426px;top:110px;width:16px;height:1px;background:#6a6a6a;"></div>
<div style="left:434px;top:113px;width:8px;height:1px;background:#6a6a6a;"></div>
<div style="left:434px;top:116px;width:8px;height:1px;background:#6a6a6a;"></div>
<div style="left:434px;top:119px;width:8px;height:1px;background:#6a6a6a;"></div>
<div style="left:426px;top:122px;width:16px;height:1px;background:#6a6a6a;"></div>
<svg style="left:426px;top:113px;" width="8" height="8" viewBox="0 0 8 8"><path d="M0 3.5H6M3.4 0.6L6.2 3.5L3.4 6.4" fill="none" stroke="#4477ad" stroke-width="1.5"/></svg>
<svg style="left:403px;top:76px;" width="19" height="18" viewBox="0 0 19 18"><text x="0" y="0" transform="translate(4.6,11.6) rotate(-47)" font-family="Liberation Sans" font-size="11" fill="#505050" stroke="#505050" stroke-width="0.3">ab</text><path d="M7.4 16.8L16.2 8.2M12.6 7.8h4v4" fill="none" stroke="#505050" stroke-width="1.2"/></svg>
<svg style="left:465px;top:88px;" width="6" height="5" viewBox="0 0 6 5"><path d="M5 0.3V3H1M2.6 1.2L0.8 3L2.6 4.6" fill="none" stroke="#4477ad" stroke-width="0.9"/></svg>
<svg style="left:457px;top:109px;" width="16" height="15" viewBox="0 0 16 15"><path d="M0.6 0.6h14.4v13.6H0.6z" fill="#fff" stroke="#6a6a6a" stroke-width="1.1"/><path d="M0.6 3.6h14.4M0.6 11.2h14.4M7.8 0.6v3M7.8 11.2v3" stroke="#6a6a6a" stroke-width="1.1"/><path d="M3 7.4h9.6M4.6 5.8L3 7.4l1.6 1.6M11 5.8l1.6 1.6L11 9" fill="none" stroke="#4a7c9e" stroke-width="1"/></svg>
<svg style="left:702px;top:108px;" width="18" height="18" viewBox="0 0 18 18"><rect x="1.6" y="1.8" width="14.6" height="7.4" fill="#fff" stroke="#3f6f9f" stroke-width="2.2"/><circle cx="8.7" cy="5.4" r="2" fill="#3f6f9f"/><ellipse cx="11.5" cy="8.3" rx="4.5" ry="1.7" fill="#e9b875" stroke="#f3f3f3" stroke-width="0.6"/><ellipse cx="11.5" cy="10.6" rx="4.5" ry="1.7" fill="#e9b875" stroke="#f3f3f3" stroke-width="0.6"/><ellipse cx="8.5" cy="13.4" rx="4.5" ry="1.7" fill="#e9b875" stroke="#f3f3f3" stroke-width="0.6"/><ellipse cx="8.5" cy="15.7" rx="4.5" ry="1.7" fill="#e9b875" stroke="#f3f3f3" stroke-width="0.6"/></svg>
<svg style="left:790px;top:111px;" width="8" height="6" viewBox="0 0 8 6"><path d="M7.4 3H1M3.4 0.4L0.8 3L3.4 5.6" fill="none" stroke="#4477ad" stroke-width="1.3"/></svg>
<svg style="left:812px;top:117.5px;" width="8" height="6" viewBox="0 0 8 6"><path d="M0.4 3H6.8M4.4 0.4L7 3L4.4 5.6" fill="none" stroke="#4477ad" stroke-width="1.3"/></svg>
<svg style="left:887px;top:72px;" width="31" height="31" viewBox="0 0 31 31"><rect x="0.5" y="0.5" width="27.5" height="24" fill="#fff" stroke="#9a9a9a"/><path d="M0.5 6.3h27.5M0.5 12.4h27.5M0.5 18.4h27.5M7.4 0.5v24M20.6 0.5v24" stroke="#9a9a9a" stroke-width="0.9" fill="none"/><rect x="7.4" y="0.6" width="6.2" height="5.4" fill="#d0623d"/><rect x="7.4" y="6.8" width="11.4" height="5.2" fill="#4e7db4"/><rect x="7.4" y="12.8" width="9.2" height="5.2" fill="#d0623d"/><rect x="7.4" y="18.8" width="4.6" height="5.4" fill="#4e7db4"/><rect x="14" y="17.2" width="15.6" height="12.4" fill="#fff" stroke="#7a7a7a" stroke-width="1"/><path d="M18.4 21.8h7M18.4 24.8h7M24 19.6l-4 7.6" stroke="#444" stroke-width="1.1" fill="none"/></svg>
<svg style="left:989px;top:73px;" width="31" height="30" viewBox="0 0 31 30"><rect x="0.6" y="1.7" width="24" height="20" fill="#fff" stroke="#7d7d7d"/><rect x="6.8" y="6.8" width="17.6" height="14.7" fill="#c3d3e8"/><path d="M0.6 6.7h24M0.6 11.7h24M0.6 16.7h24M6.7 1.7v20M12.7 1.7v20M18.7 1.7v20" stroke="#8c8c8c" stroke-width="0.9" fill="none"/><g stroke="#f3f3f3" stroke-width="1.6" stroke-linejoin="round"><path d="M29.2 6.4V13.4L24.6 17.4L21.4 14.3z" fill="#7a7a7a"/><path d="M18 18.2L20.8 15.4L23.8 18.4L20.8 21.2z" fill="#7a7a7a"/><path d="M6.2 28.8L13.2 21.4C15 19.5 18.4 19.6 19.8 21.8C21 24 19.8 27.4 16 28.9z" fill="#3a78c2"/></g><path d="M29.2 6.4V13.4L24.6 17.4L21.4 14.3z" fill="#7a7a7a"/><path d="M18 18.2L20.8 15.4L23.8 18.4L20.8 21.2z" fill="#7a7a7a"/><path d="M6.2 28.8L13.2 21.4C15 19.5 18.4 19.6 19.8 21.8C21 24 19.8 27.4 16 28.9z" fill="#3a78c2"/><path d="M13.8 22.3C15.3 20.8 17.8 20.9 18.7 22.4C19.5 23.8 18.8 25.9 17.3 26.9C16.5 25 15.2 23.6 12.8 23.5z" fill="#eaf3fc"/></svg>
<svg style="left:1057px;top:71px;" width="31" height="30" viewBox="0 0 31 30"><rect x="0.7" y="1.6" width="25" height="21" fill="#fff" stroke="#6e6e6e"/><rect x="5.4" y="6.4" width="14.2" height="9.8" fill="#bcd0e8"/><path d="M0.7 6.4h25M0.7 16.2h25M5.4 1.6v21M19.6 1.6v21" stroke="#8c8c8c" stroke-width="0.9" fill="none"/><g stroke="#f3f3f3" stroke-width="1.6" stroke-linejoin="round"><path d="M29.2 6.4V13.4L24.6 17.4L21.4 14.3z" fill="#7a7a7a"/><path d="M18 18.2L20.8 15.4L23.8 18.4L20.8 21.2z" fill="#7a7a7a"/><path d="M6.2 28.8L13.2 21.4C15 19.5 18.4 19.6 19.8 21.8C21 24 19.8 27.4 16 28.9z" fill="#3a78c2"/></g><path d="M29.2 6.4V13.4L24.6 17.4L21.4 14.3z" fill="#7a7a7a"/><path d="M18 18.2L20.8 15.4L23.8 18.4L20.8 21.2z" fill="#7a7a7a"/><path d="M6.2 28.8L13.2 21.4C15 19.5 18.4 19.6 19.8 21.8C21 24 19.8 27.4 16 28.9z" fill="#3a78c2"/><path d="M13.8 22.3C15.3 20.8 17.8 20.9 18.7 22.4C19.5 23.8 18.8 25.9 17.3 26.9C16.5 25 15.2 23.6 12.8 23.5z" fill="#eaf3fc"/></svg>
<svg style="left:1111px;top:70px;" width="17" height="17" viewBox="0 0 17 17"><path d="M0.5 0.5h8.5v4h-8.5zM4.7 0.5v4M0.5 10.5h8.5v5.5h-8.5zM4.7 10.5v5.5M0.5 13.2h8.5" fill="#fff" stroke="#6e6e6e" stroke-width="1"/><rect x="7.8" y="5.6" width="8.2" height="3.6" fill="#d8d8d8" stroke="#8a8a8a" stroke-width="1"/><path d="M11.9 5.6v3.6" stroke="#8a8a8a"/><path d="M6.6 7.4H0.8M3 5L0.6 7.4L3 9.8" fill="none" stroke="#3f76b2" stroke-width="1.3"/></svg>
<svg style="left:1111px;top:93px;" width="17" height="17" viewBox="0 0 17 17"><path d="M0.5 0.5h8.5v4h-8.5zM4.7 0.5v4M0.5 10.5h8.5v5.5h-8.5zM4.7 10.5v5.5M0.5 13.2h8.5" fill="#fff" stroke="#6e6e6e" stroke-width="1"/><rect x="3.2" y="5.6" width="5" height="3.6" fill="#d8d8d8" stroke="#8a8a8a" stroke-width="1"/><path d="M9.4 4.6L15.6 10.4M15.6 4.6L9.4 10.4" fill="none" stroke="#d9573f" stroke-width="1.3"/></svg>
<svg style="left:1111px;top:116px;" width="16" height="17" viewBox="0 0 16 17"><path d="M0.6 1.8h13.8M0.6 0.2v3.2M14.4 0.2v3.2M2.6 0.6L0.9 1.8L2.6 3M12.4 0.6l1.7 1.2L12.4 3" fill="none" stroke="#3f76b2" stroke-width="0.9"/><rect x="0.5" y="5" width="14" height="10" fill="#fff" stroke="#6e6e6e"/><path d="M0.5 8.3h14M0.5 11.6h14M4 5v10M7.5 5v10M11 5v10" stroke="#8a8a8a" stroke-width="0.8" fill="none"/><rect x="4" y="8.3" width="3.6" height="3.4" fill="#3f76b2"/><path d="M1 16.2h13" stroke="#8a8a8a" stroke-width="0.8"/></svg>
<svg style="left:1216px;top:69px;" width="18" height="17" viewBox="0 0 18 17"><path d="M15 4.2V2.2H2.6L9 8.5L2.6 14.8H15V12.6" fill="none" stroke="#444" stroke-width="2.1"/></svg>
<svg style="left:1218px;top:93px;" width="14" height="16" viewBox="0 0 14 16"><rect x="0.5" y="0.5" width="13" height="15" fill="#fff" stroke="#6e6e6e"/><rect x="0" y="0" width="14" height="3.6" fill="#6e6e6e"/><path d="M7 5.4v7.8M3.6 9.6L7 13.2l3.4-3.6" fill="none" stroke="#3f76b2" stroke-width="1.6"/></svg>
<svg style="left:1217px;top:116px;" width="16" height="15" viewBox="0 0 16 15"><g transform="rotate(-42 8 7.5)"><rect x="1.4" y="4.2" width="13.2" height="6.4" rx="0.8" fill="#ea7b90"/><rect x="1.4" y="4.2" width="2.2" height="6.4" fill="#f3b4c0"/><rect x="3.4" y="4.2" width="0.8" height="6.4" fill="#f3f3f3"/></g></svg>
<svg style="left:1280px;top:79px;" width="20" height="17" viewBox="0 0 20 17"><path d="M1 1.4h17.4L11.4 8.6v7H8v-7z" fill="#7a7a7a"/><path d="M9 9h1.4v5.8H9z" fill="#fff"/><path d="M3.6 2.4L9 8.2" stroke="#f3f3f3" stroke-width="0"/></svg>
<svg style="left:1336px;top:70px;" width="32" height="30" viewBox="0 0 32 30"><circle cx="18.9" cy="11.9" r="9.1" fill="#fbfbfb" stroke="#4a7eb5" stroke-width="2"/><path d="M12 19.2L4.4 26.8" stroke="#4a7eb5" stroke-width="3.4" stroke-linecap="round"/></svg>
<span class="t" id="t0" style="font-size:13px;color:#333;line-height:17px;top:172.0px;left:12.5px;transform-origin:left center;transform:scaleX(1.0059);">A1</span>
<span class="t" id="t1" style="font-size:13px;color:#333;line-height:17px;top:172.0px;left:260.5px;transform-origin:left center;transform:scaleX(1.1079);">ХДФ</span>
<span class="t" id="t2" style="font-size:14px;color:#4a4a4a;font-weight:700;font-style:italic;line-height:18px;top:170.0px;font-family:'Liberation Serif';left:222.0px;transform-origin:left center;">f</span>
<span class="t" id="t3" style="font-size:10.5px;color:#4a4a4a;font-weight:700;font-style:italic;line-height:14px;top:175.3px;font-family:'Liberation Serif';left:227.3px;transform-origin:left center;">x</span>
<span class="t" id="t4" style="font-size:13px;color:#217346;line-height:17px;top:205.0px;left:43.0px;width:40.0px;text-align:center;">A</span>
<span class="t" id="t5" style="font-size:13px;color:#262626;line-height:17px;top:205.0px;left:174.0px;width:40.0px;text-align:center;">B</span>
<span class="t" id="t6" style="font-size:13px;color:#262626;line-height:17px;top:205.0px;left:318.0px;width:40.0px;text-align:center;">C</span>
<span class="t" id="t7" style="font-size:13px;color:#262626;line-height:17px;top:205.0px;left:400.5px;width:40.0px;text-align:center;">D</span>
<span class="t" id="t8" style="font-size:13px;color:#262626;line-height:17px;top:205.0px;left:470.0px;width:40.0px;text-align:center;">E</span>
<span class="t" id="t9" style="font-size:13px;color:#262626;line-height:17px;top:205.0px;left:548.0px;width:40.0px;text-align:center;">F</span>
<span class="t" id="t10" style="font-size:13px;color:#262626;line-height:17px;top:205.0px;left:622.0px;width:40.0px;text-align:center;">G</span>
<span class="t" id="t11" style="font-size:13px;color:#262626;line-height:17px;top:205.0px;left:695.5px;width:40.0px;text-align:center;">K</span>
<span class="t" id="t12" style="font-size:13px;color:#262626;line-height:17px;top:205.0px;left:790.5px;width:40.0px;text-align:center;">L</span>
<span class="t" id="t13" style="font-size:13px;color:#262626;line-height:17px;top:205.0px;left:877.5px;width:40.0px;text-align:center;">M</span>
<span class="t" id="t14" style="font-size:13px;color:#262626;line-height:17px;top:205.0px;left:941.5px;width:40.0px;text-align:center;">N</span>
<span class="t" id="t15" style="font-size:13px;color:#262626;line-height:17px;top:205.0px;left:1005.5px;width:40.0px;text-align:center;">O</span>
<span class="t" id="t16" style="font-size:13px;color:#262626;line-height:17px;top:205.0px;left:1069.5px;width:40.0px;text-align:center;">P</span>
<span class="t" id="t17" style="font-size:13px;color:#262626;line-height:17px;top:205.0px;left:1133.5px;width:40.0px;text-align:center;">V</span>
<span class="t" id="t18" style="font-size:13px;color:#262626;line-height:17px;top:205.0px;left:1197.5px;width:40.0px;text-align:center;">W</span>
<span class="t" id="t19" style="font-size:13px;color:#262626;line-height:17px;top:205.0px;left:1261.5px;width:40.0px;text-align:center;">X</span>
<span class="t" id="t20" style="font-size:13px;color:#262626;line-height:17px;top:205.0px;left:1325.5px;width:40.0px;text-align:center;">Y</span>
<span class="t" id="t21" style="font-size:13px;color:#262626;line-height:17px;top:205.0px;left:1389.5px;width:40.0px;text-align:center;">Z</span>
<span class="t" id="t22" style="font-size:13px;color:#217346;line-height:17px;top:225.0px;left:9.7px;transform-origin:left center;transform:scaleX(0.9123);">1</span>
<span class="t" id="t23" style="font-size:13px;color:#262626;line-height:17px;top:245.0px;left:9.7px;transform-origin:left center;transform:scaleX(0.9123);">2</span>
<span class="t" id="t24" style="font-size:13px;color:#262626;line-height:17px;top:265.0px;left:9.7px;transform-origin:left center;transform:scaleX(0.9123);">3</span>
<span class="t" id="t25" style="font-size:13px;color:#262626;line-height:17px;top:285.0px;left:9.7px;transform-origin:left center;transform:scaleX(0.9123);">4</span>
<span class="t" id="t26" style="font-size:13px;color:#262626;line-height:17px;top:305.0px;left:9.7px;transform-origin:left center;transform:scaleX(0.9123);">5</span>
<span class="t" id="t27" style="font-size:13px;color:#262626;line-height:17px;top:325.0px;left:9.7px;transform-origin:left center;transform:scaleX(0.9123);">6</span>
<span class="t" id="t28" style="font-size:13px;color:#262626;line-height:17px;top:345.0px;left:9.7px;transform-origin:left center;transform:scaleX(0.9123);">7</span>
<span class="t" id="t29" style="font-size:13px;color:#262626;line-height:17px;top:365.0px;left:9.7px;transform-origin:left center;transform:scaleX(0.9123);">8</span>
<span class="t" id="t30" style="font-size:13px;color:#262626;line-height:17px;top:385.0px;left:9.7px;transform-origin:left center;transform:scaleX(0.9123);">9</span>
<span class="t" id="t31" style="font-size:13px;color:#262626;line-height:17px;top:405.0px;left:6.2px;transform-origin:left center;transform:scaleX(0.9400);">10</span>
<span class="t" id="t32" style="font-size:13px;color:#262626;line-height:17px;top:425.0px;left:6.2px;transform-origin:left center;transform:scaleX(1.0074);">11</span>
<span class="t" id="t33" style="font-size:13px;color:#262626;line-height:17px;top:445.0px;left:6.2px;transform-origin:left center;transform:scaleX(0.9400);">12</span>
<span class="t" id="t34" style="font-size:13px;color:#262626;line-height:17px;top:465.0px;left:6.2px;transform-origin:left center;transform:scaleX(0.9400);">13</span>
<span class="t" id="t35" style="font-size:13px;color:#262626;line-height:17px;top:485.0px;left:6.2px;transform-origin:left center;transform:scaleX(0.9400);">14</span>
<span class="t" id="t36" style="font-size:13px;color:#262626;line-height:17px;top:505.0px;left:6.2px;transform-origin:left center;transform:scaleX(0.9400);">15</span>
<span class="t" id="t37" style="font-size:13px;color:#262626;line-height:17px;top:525.0px;left:6.2px;transform-origin:left center;transform:scaleX(0.9400);">16</span>
<span class="t" id="t38" style="font-size:13px;color:#262626;line-height:17px;top:545.0px;left:6.2px;transform-origin:left center;transform:scaleX(0.9400);">17</span>
<span class="t" id="t39" style="font-size:13px;color:#262626;line-height:17px;top:565.0px;left:6.2px;transform-origin:left center;transform:scaleX(0.9400);">18</span>
<span class="t" id="t40" style="font-size:13px;color:#262626;line-height:17px;top:585.0px;left:6.2px;transform-origin:left center;transform:scaleX(0.9400);">19</span>
<span class="t" id="t41" style="font-size:13px;color:#262626;line-height:17px;top:605.0px;left:6.2px;transform-origin:left center;transform:scaleX(0.9400);">20</span>
<span class="t" id="t42" style="font-size:13px;color:#262626;line-height:17px;top:625.0px;left:6.2px;transform-origin:left center;transform:scaleX(0.9400);">21</span>
<span class="t" id="t43" style="font-size:13px;color:#262626;line-height:17px;top:645.0px;left:6.2px;transform-origin:left center;transform:scaleX(0.9400);">22</span>
<span class="t" id="t44" style="font-size:13px;color:#262626;line-height:17px;top:665.0px;left:6.2px;transform-origin:left center;transform:scaleX(0.9400);">23</span>
<span class="t" id="t45" style="font-size:13px;color:#262626;line-height:17px;top:685.0px;left:6.2px;transform-origin:left center;transform:scaleX(0.9400);">24</span>
<span class="t" id="t46" style="font-size:13px;color:#262626;line-height:17px;top:705.0px;left:6.2px;transform-origin:left center;transform:scaleX(0.9400);">25</span>
<span class="t" id="t47" style="font-size:13px;color:#262626;line-height:17px;top:725.0px;left:6.2px;transform-origin:left center;transform:scaleX(0.9400);">26</span>
<span class="t" id="t48" style="font-size:13px;color:#262626;line-height:17px;top:745.0px;left:6.2px;transform-origin:left center;transform:scaleX(0.9400);">27</span>
<span class="t" id="t49" style="font-size:13px;color:#262626;line-height:17px;top:765.0px;left:6.2px;transform-origin:left center;transform:scaleX(0.9400);">28</span>
<span class="t" id="t50" style="font-size:13px;color:#262626;line-height:17px;top:785.0px;left:6.2px;transform-origin:left center;transform:scaleX(0.9400);">29</span>
<span class="t" id="t51" style="font-size:13px;color:#262626;line-height:17px;top:805.0px;left:6.2px;transform-origin:left center;transform:scaleX(0.9400);">30</span>
<span class="t" id="t52" style="font-size:13px;color:#bd0f0f;font-weight:700;line-height:17px;top:225.0px;left:27.5px;transform-origin:left center;transform:scaleX(1.0222);">ХДФ</span>
<span class="t" id="t53" style="font-size:13px;color:#bd0f0f;line-height:17px;top:225.0px;left:103.0px;transform-origin:left center;transform:scaleX(1.0516);">(Ограничение 1000 позиций)</span>
<span class="t" id="t54" style="font-size:13px;color:#bd0f0f;font-weight:700;line-height:17px;top:225.0px;right:776.5px;transform-origin:right center;transform:scaleX(1.0473);">11</span>
<span class="t" id="t55" style="font-size:13px;color:#bd0f0f;font-weight:700;line-height:17px;top:225.0px;right:696.5px;transform-origin:right center;transform:scaleX(1.0074);">3,16</span>
<span class="t" id="t56" style="font-size:13px;color:#fff;font-weight:700;line-height:17px;top:225.0px;left:886.7px;transform-origin:left center;transform:scaleX(0.9735);">Чистый раскрой</span>
<span class="t" id="t57" style="font-size:13px;color:#000;line-height:17px;top:245.0px;left:27.9px;transform-origin:left center;transform:scaleX(1.0895);">Модуль</span>
<span class="t" id="t58" style="font-size:13px;color:#000;line-height:17px;top:245.0px;left:103.0px;transform-origin:left center;transform:scaleX(1.0894);">Артикул</span>
<span class="t" id="t59" style="font-size:13px;color:#000;line-height:17px;top:245.0px;left:290.0px;transform-origin:left center;transform:scaleX(1.0570);">Материал</span>
<span class="t" id="t60" style="font-size:13px;color:#000;line-height:17px;top:245.0px;left:390.5px;transform-origin:left center;transform:scaleX(1.0824);">Длина</span>
<span class="t" id="t61" style="font-size:13px;color:#000;line-height:17px;top:245.0px;left:454.9px;transform-origin:left center;transform:scaleX(1.0795);">Ширина</span>
<span class="t" id="t62" style="font-size:13px;color:#000;line-height:17px;top:245.0px;left:529.9px;transform-origin:left center;transform:scaleX(1.0515);">Толщина</span>
<span class="t" id="t63" style="font-size:13px;color:#000;line-height:17px;top:245.0px;left:610.8px;transform-origin:left center;transform:scaleX(1.0910);">Кол-во</span>
<span class="t" id="t64" style="font-size:13px;color:#000;line-height:17px;top:245.0px;left:757.5px;transform-origin:left center;transform:scaleX(1.0570);">Материал</span>
<span class="t" id="t65" style="font-size:13px;color:#000;line-height:17px;top:245.0px;left:868.0px;transform-origin:left center;transform:scaleX(1.0824);">Длина</span>
<div style="left:0;top:0;width:738.5px;height:870px;overflow:hidden;"><span class="t" id="t66" style="font-size:13px;color:#000;line-height:17px;top:245.0px;left:677.5px;transform-origin:left center;transform:scaleX(1.0747);">Квадратура</span></div>
<div style="left:0;top:0;width:976.5px;height:870px;overflow:hidden;"><span class="t" id="t67" style="font-size:13px;color:#000;line-height:17px;top:245.0px;left:932.3px;transform-origin:left center;transform:scaleX(1.0816);">Ширина</span></div>
<div style="left:0;top:0;width:1040.5px;height:870px;overflow:hidden;"><span class="t" id="t68" style="font-size:13px;color:#000;line-height:17px;top:245.0px;left:996.1px;transform-origin:left center;transform:scaleX(1.0885);">Кол-во</span></div>
<div style="left:0;top:0;width:1104.5px;height:870px;overflow:hidden;"><span class="t" id="t69" style="font-size:13px;color:#000;line-height:17px;top:245.0px;left:1060.1px;transform-origin:left center;transform:scaleX(1.0515);">Толщина</span></div>
<span class="t" id="t70" style="font-size:13px;color:#000;line-height:17px;top:265.0px;left:31.0px;transform-origin:left center;transform:scaleX(0.9480);">BB1</span>
<span class="t" id="t71" style="font-size:13px;color:#000;line-height:17px;top:265.0px;left:102.5px;transform-origin:left center;transform:scaleX(1.0232);">Задняя стенка</span>
<span class="t" id="t72" style="font-size:13px;color:#000;line-height:17px;top:265.0px;left:290.0px;transform-origin:left center;transform:scaleX(1.0095);">ХДФ_Базовая</span>
<span class="t" id="t73" style="font-size:13px;color:#000;line-height:17px;top:265.0px;right:999.5px;transform-origin:right center;transform:scaleX(0.9676);">716</span>
<span class="t" id="t74" style="font-size:13px;color:#000;line-height:17px;top:265.0px;right:924.5px;transform-origin:right center;transform:scaleX(0.9676);">396</span>
<span class="t" id="t75" style="font-size:13px;color:#000;line-height:17px;top:265.0px;right:843.5px;transform-origin:right center;transform:scaleX(1.0644);">4</span>
<span class="t" id="t76" style="font-size:13px;color:#000;line-height:17px;top:265.0px;right:776.5px;transform-origin:right center;transform:scaleX(0.8570);">1</span>
<span class="t" id="t77" style="font-size:13px;color:#000;line-height:17px;top:265.0px;right:696.5px;transform-origin:right center;">0,28</span>
<span class="t" id="t78" style="font-size:13px;color:#000;line-height:17px;top:285.0px;left:31.0px;transform-origin:left center;transform:scaleX(0.9135);">BD</span>
<span class="t" id="t79" style="font-size:13px;color:#000;line-height:17px;top:285.0px;left:102.5px;transform-origin:left center;transform:scaleX(1.0672);">Дно ящика</span>
<span class="t" id="t80" style="font-size:13px;color:#000;line-height:17px;top:285.0px;left:290.0px;transform-origin:left center;transform:scaleX(1.0095);">ХДФ_Базовая</span>
<span class="t" id="t81" style="font-size:13px;color:#000;line-height:17px;top:285.0px;right:999.5px;transform-origin:right center;transform:scaleX(0.9676);">538</span>
<span class="t" id="t82" style="font-size:13px;color:#000;line-height:17px;top:285.0px;right:924.5px;transform-origin:right center;transform:scaleX(0.9676);">446</span>
<span class="t" id="t83" style="font-size:13px;color:#000;line-height:17px;top:285.0px;right:843.5px;transform-origin:right center;transform:scaleX(1.0644);">4</span>
<span class="t" id="t84" style="font-size:13px;color:#000;line-height:17px;top:285.0px;right:776.5px;transform-origin:right center;transform:scaleX(0.8570);">1</span>
<span class="t" id="t85" style="font-size:13px;color:#000;line-height:17px;top:285.0px;right:696.5px;transform-origin:right center;">0,24</span>
<span class="t" id="t86" style="font-size:13px;color:#000;line-height:17px;top:305.0px;left:31.0px;transform-origin:left center;transform:scaleX(0.9135);">BD</span>
<span class="t" id="t87" style="font-size:13px;color:#000;line-height:17px;top:305.0px;left:102.5px;transform-origin:left center;transform:scaleX(1.0672);">Дно ящика</span>
<span class="t" id="t88" style="font-size:13px;color:#000;line-height:17px;top:305.0px;left:290.0px;transform-origin:left center;transform:scaleX(1.0095);">ХДФ_Базовая</span>
<span class="t" id="t89" style="font-size:13px;color:#000;line-height:17px;top:305.0px;right:999.5px;transform-origin:right center;transform:scaleX(0.9676);">538</span>
<span class="t" id="t90" style="font-size:13px;color:#000;line-height:17px;top:305.0px;right:924.5px;transform-origin:right center;transform:scaleX(0.9676);">446</span>
<span class="t" id="t91" style="font-size:13px;color:#000;line-height:17px;top:305.0px;right:843.5px;transform-origin:right center;transform:scaleX(1.0644);">4</span>
<span class="t" id="t92" style="font-size:13px;color:#000;line-height:17px;top:305.0px;right:776.5px;transform-origin:right center;transform:scaleX(0.8570);">1</span>
<span class="t" id="t93" style="font-size:13px;color:#000;line-height:17px;top:305.0px;right:696.5px;transform-origin:right center;">0,24</span>
<span class="t" id="t94" style="font-size:13px;color:#000;line-height:17px;top:325.0px;left:31.0px;transform-origin:left center;transform:scaleX(0.9135);">BD</span>
<span class="t" id="t95" style="font-size:13px;color:#000;line-height:17px;top:325.0px;left:102.5px;transform-origin:left center;transform:scaleX(1.0672);">Дно ящика</span>
<span class="t" id="t96" style="font-size:13px;color:#000;line-height:17px;top:325.0px;left:290.0px;transform-origin:left center;transform:scaleX(1.0095);">ХДФ_Базовая</span>
<span class="t" id="t97" style="font-size:13px;color:#000;line-height:17px;top:325.0px;right:999.5px;transform-origin:right center;transform:scaleX(0.9676);">538</span>
<span class="t" id="t98" style="font-size:13px;color:#000;line-height:17px;top:325.0px;right:924.5px;transform-origin:right center;transform:scaleX(0.9676);">446</span>
<span class="t" id="t99" style="font-size:13px;color:#000;line-height:17px;top:325.0px;right:843.5px;transform-origin:right center;transform:scaleX(1.0644);">4</span>
<span class="t" id="t100" style="font-size:13px;color:#000;line-height:17px;top:325.0px;right:776.5px;transform-origin:right center;transform:scaleX(0.8570);">1</span>
<span class="t" id="t101" style="font-size:13px;color:#000;line-height:17px;top:325.0px;right:696.5px;transform-origin:right center;">0,24</span>
<span class="t" id="t102" style="font-size:13px;color:#000;line-height:17px;top:345.0px;left:31.0px;transform-origin:left center;transform:scaleX(0.9135);">BD</span>
<span class="t" id="t103" style="font-size:13px;color:#000;line-height:17px;top:345.0px;left:102.5px;transform-origin:left center;transform:scaleX(1.0232);">Задняя стенка</span>
<span class="t" id="t104" style="font-size:13px;color:#000;line-height:17px;top:345.0px;left:290.0px;transform-origin:left center;transform:scaleX(1.0095);">ХДФ_Базовая</span>
<span class="t" id="t105" style="font-size:13px;color:#000;line-height:17px;top:345.0px;right:999.5px;transform-origin:right center;transform:scaleX(0.9676);">716</span>
<span class="t" id="t106" style="font-size:13px;color:#000;line-height:17px;top:345.0px;right:924.5px;transform-origin:right center;transform:scaleX(0.9676);">596</span>
<span class="t" id="t107" style="font-size:13px;color:#000;line-height:17px;top:345.0px;right:843.5px;transform-origin:right center;transform:scaleX(1.0644);">4</span>
<span class="t" id="t108" style="font-size:13px;color:#000;line-height:17px;top:345.0px;right:776.5px;transform-origin:right center;transform:scaleX(0.8570);">1</span>
<span class="t" id="t109" style="font-size:13px;color:#000;line-height:17px;top:345.0px;right:696.5px;transform-origin:right center;">0,43</span>
<span class="t" id="t110" style="font-size:13px;color:#000;line-height:17px;top:365.0px;left:31.0px;transform-origin:left center;transform:scaleX(0.8898);">BJ</span>
<span class="t" id="t111" style="font-size:13px;color:#000;line-height:17px;top:365.0px;left:102.5px;transform-origin:left center;transform:scaleX(1.0232);">Задняя стенка</span>
<span class="t" id="t112" style="font-size:13px;color:#000;line-height:17px;top:365.0px;left:290.0px;transform-origin:left center;transform:scaleX(1.0095);">ХДФ_Базовая</span>
<span class="t" id="t113" style="font-size:13px;color:#000;line-height:17px;top:365.0px;right:999.5px;transform-origin:right center;transform:scaleX(0.9676);">716</span>
<span class="t" id="t114" style="font-size:13px;color:#000;line-height:17px;top:365.0px;right:924.5px;transform-origin:right center;transform:scaleX(0.9676);">196</span>
<span class="t" id="t115" style="font-size:13px;color:#000;line-height:17px;top:365.0px;right:843.5px;transform-origin:right center;transform:scaleX(1.0644);">4</span>
<span class="t" id="t116" style="font-size:13px;color:#000;line-height:17px;top:365.0px;right:776.5px;transform-origin:right center;transform:scaleX(0.8570);">1</span>
<span class="t" id="t117" style="font-size:13px;color:#000;line-height:17px;top:365.0px;right:696.5px;transform-origin:right center;">0,14</span>
<span class="t" id="t118" style="font-size:13px;color:#000;line-height:17px;top:385.0px;left:31.0px;transform-origin:left center;transform:scaleX(0.9900);">TA</span>
<span class="t" id="t119" style="font-size:13px;color:#000;line-height:17px;top:385.0px;left:102.5px;transform-origin:left center;transform:scaleX(1.0232);">Задняя стенка</span>
<span class="t" id="t120" style="font-size:13px;color:#000;line-height:17px;top:385.0px;left:290.0px;transform-origin:left center;transform:scaleX(1.0095);">ХДФ_Базовая</span>
<span class="t" id="t121" style="font-size:13px;color:#000;line-height:17px;top:385.0px;right:999.5px;transform-origin:right center;transform:scaleX(0.9676);">708</span>
<span class="t" id="t122" style="font-size:13px;color:#000;line-height:17px;top:385.0px;right:924.5px;transform-origin:right center;transform:scaleX(0.9676);">188</span>
<span class="t" id="t123" style="font-size:13px;color:#000;line-height:17px;top:385.0px;right:843.5px;transform-origin:right center;transform:scaleX(1.0644);">4</span>
<span class="t" id="t124" style="font-size:13px;color:#000;line-height:17px;top:385.0px;right:776.5px;transform-origin:right center;transform:scaleX(0.8570);">1</span>
<span class="t" id="t125" style="font-size:13px;color:#000;line-height:17px;top:385.0px;right:696.5px;transform-origin:right center;">0,13</span>
<span class="t" id="t126" style="font-size:13px;color:#000;line-height:17px;top:405.0px;left:31.0px;transform-origin:left center;transform:scaleX(0.9328);">TC2A</span>
<span class="t" id="t127" style="font-size:13px;color:#000;line-height:17px;top:405.0px;left:102.5px;transform-origin:left center;transform:scaleX(1.0232);">Задняя стенка</span>
<span class="t" id="t128" style="font-size:13px;color:#000;line-height:17px;top:405.0px;left:290.0px;transform-origin:left center;transform:scaleX(1.0095);">ХДФ_Базовая</span>
<span class="t" id="t129" style="font-size:13px;color:#000;line-height:17px;top:405.0px;right:999.5px;transform-origin:right center;transform:scaleX(0.9676);">708</span>
<span class="t" id="t130" style="font-size:13px;color:#000;line-height:17px;top:405.0px;right:924.5px;transform-origin:right center;transform:scaleX(0.9676);">588</span>
<span class="t" id="t131" style="font-size:13px;color:#000;line-height:17px;top:405.0px;right:843.5px;transform-origin:right center;transform:scaleX(1.0644);">4</span>
<span class="t" id="t132" style="font-size:13px;color:#000;line-height:17px;top:405.0px;right:776.5px;transform-origin:right center;transform:scaleX(0.8570);">1</span>
<span class="t" id="t133" style="font-size:13px;color:#000;line-height:17px;top:405.0px;right:696.5px;transform-origin:right center;">0,42</span>
<span class="t" id="t134" style="font-size:13px;color:#000;line-height:17px;top:425.0px;left:31.0px;transform-origin:left center;transform:scaleX(0.9500);">TB2A_S</span>
<span class="t" id="t135" style="font-size:13px;color:#000;line-height:17px;top:425.0px;left:102.5px;transform-origin:left center;transform:scaleX(1.0232);">Задняя стенка</span>
<span class="t" id="t136" style="font-size:13px;color:#000;line-height:17px;top:425.0px;left:290.0px;transform-origin:left center;transform:scaleX(1.0095);">ХДФ_Базовая</span>
<span class="t" id="t137" style="font-size:13px;color:#000;line-height:17px;top:425.0px;right:999.5px;transform-origin:right center;transform:scaleX(0.9676);">708</span>
<span class="t" id="t138" style="font-size:13px;color:#000;line-height:17px;top:425.0px;right:924.5px;transform-origin:right center;transform:scaleX(0.9676);">788</span>
<span class="t" id="t139" style="font-size:13px;color:#000;line-height:17px;top:425.0px;right:843.5px;transform-origin:right center;transform:scaleX(1.0644);">4</span>
<span class="t" id="t140" style="font-size:13px;color:#000;line-height:17px;top:425.0px;right:776.5px;transform-origin:right center;transform:scaleX(0.8570);">1</span>
<span class="t" id="t141" style="font-size:13px;color:#000;line-height:17px;top:425.0px;right:696.5px;transform-origin:right center;">0,56</span>
<span class="t" id="t142" style="font-size:13px;color:#000;line-height:17px;top:445.0px;left:31.0px;transform-origin:left center;transform:scaleX(0.9380);">TB1A</span>
<span class="t" id="t143" style="font-size:13px;color:#000;line-height:17px;top:445.0px;left:102.5px;transform-origin:left center;transform:scaleX(1.0232);">Задняя стенка</span>
<span class="t" id="t144" style="font-size:13px;color:#000;line-height:17px;top:445.0px;left:290.0px;transform-origin:left center;transform:scaleX(1.0095);">ХДФ_Базовая</span>
<span class="t" id="t145" style="font-size:13px;color:#000;line-height:17px;top:445.0px;right:999.5px;transform-origin:right center;transform:scaleX(0.9676);">708</span>
<span class="t" id="t146" style="font-size:13px;color:#000;line-height:17px;top:445.0px;right:924.5px;transform-origin:right center;transform:scaleX(0.9676);">388</span>
<span class="t" id="t147" style="font-size:13px;color:#000;line-height:17px;top:445.0px;right:843.5px;transform-origin:right center;transform:scaleX(1.0644);">4</span>
<span class="t" id="t148" style="font-size:13px;color:#000;line-height:17px;top:445.0px;right:776.5px;transform-origin:right center;transform:scaleX(0.8570);">1</span>
<span class="t" id="t149" style="font-size:13px;color:#000;line-height:17px;top:445.0px;right:696.5px;transform-origin:right center;">0,27</span>
<span class="t" id="t150" style="font-size:13px;color:#000;line-height:17px;top:465.0px;left:31.0px;transform-origin:left center;transform:scaleX(0.9564);">BHR100</span>
<span class="t" id="t151" style="font-size:13px;color:#000;line-height:17px;top:465.0px;left:102.5px;transform-origin:left center;transform:scaleX(1.0232);">Задняя стенка</span>
<span class="t" id="t152" style="font-size:13px;color:#000;line-height:17px;top:465.0px;left:290.0px;transform-origin:left center;transform:scaleX(1.0095);">ХДФ_Базовая</span>
<span class="t" id="t153" style="font-size:13px;color:#000;line-height:17px;top:465.0px;right:999.5px;transform-origin:right center;transform:scaleX(0.9676);">716</span>
<span class="t" id="t154" style="font-size:13px;color:#000;line-height:17px;top:465.0px;right:924.5px;transform-origin:right center;transform:scaleX(0.9676);">292</span>
<span class="t" id="t155" style="font-size:13px;color:#000;line-height:17px;top:465.0px;right:843.5px;transform-origin:right center;transform:scaleX(1.0644);">4</span>
<span class="t" id="t156" style="font-size:13px;color:#000;line-height:17px;top:465.0px;right:776.5px;transform-origin:right center;transform:scaleX(0.8570);">1</span>
<span class="t" id="t157" style="font-size:13px;color:#000;line-height:17px;top:465.0px;right:696.5px;transform-origin:right center;">0,21</span>
<span class="t" id="t158" style="font-size:13px;color:#000;line-height:17px;top:265.0px;left:757.5px;transform-origin:left center;transform:scaleX(0.9800);">ХДФ_БАЗОВАЯ</span>
<span class="t" id="t159" style="font-size:13px;color:#000;line-height:17px;top:265.0px;right:522.5px;transform-origin:right center;transform:scaleX(0.9676);">716</span>
<span class="t" id="t160" style="font-size:13px;color:#000;line-height:17px;top:265.0px;right:458.5px;transform-origin:right center;transform:scaleX(0.9676);">396</span>
<span class="t" id="t161" style="font-size:13px;color:#000;line-height:17px;top:265.0px;right:394.5px;transform-origin:right center;transform:scaleX(0.8570);">1</span>
<span class="t" id="t162" style="font-size:13px;color:#000;line-height:17px;top:265.0px;right:330.5px;transform-origin:right center;transform:scaleX(1.0644);">4</span>
<span class="t" id="t163" style="font-size:13px;color:#000;line-height:17px;top:285.0px;left:757.5px;transform-origin:left center;transform:scaleX(0.9800);">ХДФ_БАЗОВАЯ</span>
<span class="t" id="t164" style="font-size:13px;color:#000;line-height:17px;top:285.0px;right:522.5px;transform-origin:right center;transform:scaleX(0.9676);">538</span>
<span class="t" id="t165" style="font-size:13px;color:#000;line-height:17px;top:285.0px;right:458.5px;transform-origin:right center;transform:scaleX(0.9676);">446</span>
<span class="t" id="t166" style="font-size:13px;color:#000;line-height:17px;top:285.0px;right:394.5px;transform-origin:right center;transform:scaleX(1.0367);">3</span>
<span class="t" id="t167" style="font-size:13px;color:#000;line-height:17px;top:285.0px;right:330.5px;transform-origin:right center;transform:scaleX(1.0644);">4</span>
<span class="t" id="t168" style="font-size:13px;color:#000;line-height:17px;top:305.0px;left:757.5px;transform-origin:left center;transform:scaleX(0.9800);">ХДФ_БАЗОВАЯ</span>
<span class="t" id="t169" style="font-size:13px;color:#000;line-height:17px;top:305.0px;right:522.5px;transform-origin:right center;transform:scaleX(0.9676);">716</span>
<span class="t" id="t170" style="font-size:13px;color:#000;line-height:17px;top:305.0px;right:458.5px;transform-origin:right center;transform:scaleX(0.9676);">596</span>
<span class="t" id="t171" style="font-size:13px;color:#000;line-height:17px;top:305.0px;right:394.5px;transform-origin:right center;transform:scaleX(0.8570);">1</span>
<span class="t" id="t172" style="font-size:13px;color:#000;line-height:17px;top:305.0px;right:330.5px;transform-origin:right center;transform:scaleX(1.0644);">4</span>
<span class="t" id="t173" style="font-size:13px;color:#000;line-height:17px;top:325.0px;left:757.5px;transform-origin:left center;transform:scaleX(0.9800);">ХДФ_БАЗОВАЯ</span>
<span class="t" id="t174" style="font-size:13px;color:#000;line-height:17px;top:325.0px;right:522.5px;transform-origin:right center;transform:scaleX(0.9676);">716</span>
<span class="t" id="t175" style="font-size:13px;color:#000;line-height:17px;top:325.0px;right:458.5px;transform-origin:right center;transform:scaleX(0.9676);">196</span>
<span class="t" id="t176" style="font-size:13px;color:#000;line-height:17px;top:325.0px;right:394.5px;transform-origin:right center;transform:scaleX(0.8570);">1</span>
<span class="t" id="t177" style="font-size:13px;color:#000;line-height:17px;top:325.0px;right:330.5px;transform-origin:right center;transform:scaleX(1.0644);">4</span>
<span class="t" id="t178" style="font-size:13px;color:#000;line-height:17px;top:345.0px;left:757.5px;transform-origin:left center;transform:scaleX(0.9800);">ХДФ_БАЗОВАЯ</span>
<span class="t" id="t179" style="font-size:13px;color:#000;line-height:17px;top:345.0px;right:522.5px;transform-origin:right center;transform:scaleX(0.9676);">708</span>
<span class="t" id="t180" style="font-size:13px;color:#000;line-height:17px;top:345.0px;right:458.5px;transform-origin:right center;transform:scaleX(0.9676);">188</span>
<span class="t" id="t181" style="font-size:13px;color:#000;line-height:17px;top:345.0px;right:394.5px;transform-origin:right center;transform:scaleX(0.8570);">1</span>
<span class="t" id="t182" style="font-size:13px;color:#000;line-height:17px;top:345.0px;right:330.5px;transform-origin:right center;transform:scaleX(1.0644);">4</span>
<span class="t" id="t183" style="font-size:13px;color:#000;line-height:17px;top:365.0px;left:757.5px;transform-origin:left center;transform:scaleX(0.9800);">ХДФ_БАЗОВАЯ</span>
<span class="t" id="t184" style="font-size:13px;color:#000;line-height:17px;top:365.0px;right:522.5px;transform-origin:right center;transform:scaleX(0.9676);">708</span>
<span class="t" id="t185" style="font-size:13px;color:#000;line-height:17px;top:365.0px;right:458.5px;transform-origin:right center;transform:scaleX(0.9676);">588</span>
<span class="t" id="t186" style="font-size:13px;color:#000;line-height:17px;top:365.0px;right:394.5px;transform-origin:right center;transform:scaleX(0.8570);">1</span>
<span class="t" id="t187" style="font-size:13px;color:#000;line-height:17px;top:365.0px;right:330.5px;transform-origin:right center;transform:scaleX(1.0644);">4</span>
<span class="t" id="t188" style="font-size:13px;color:#000;line-height:17px;top:385.0px;left:757.5px;transform-origin:left center;transform:scaleX(0.9800);">ХДФ_БАЗОВАЯ</span>
<span class="t" id="t189" style="font-size:13px;color:#000;line-height:17px;top:385.0px;right:522.5px;transform-origin:right center;transform:scaleX(0.9676);">708</span>
<span class="t" id="t190" style="font-size:13px;color:#000;line-height:17px;top:385.0px;right:458.5px;transform-origin:right center;transform:scaleX(0.9676);">788</span>
<span class="t" id="t191" style="font-size:13px;color:#000;line-height:17px;top:385.0px;right:394.5px;transform-origin:right center;transform:scaleX(0.8570);">1</span>
<span class="t" id="t192" style="font-size:13px;color:#000;line-height:17px;top:385.0px;right:330.5px;transform-origin:right center;transform:scaleX(1.0644);">4</span>
<span class="t" id="t193" style="font-size:13px;color:#000;line-height:17px;top:405.0px;left:757.5px;transform-origin:left center;transform:scaleX(0.9800);">ХДФ_БАЗОВАЯ</span>
<span class="t" id="t194" style="font-size:13px;color:#000;line-height:17px;top:405.0px;right:522.5px;transform-origin:right center;transform:scaleX(0.9676);">708</span>
<span class="t" id="t195" style="font-size:13px;color:#000;line-height:17px;top:405.0px;right:458.5px;transform-origin:right center;transform:scaleX(0.9676);">388</span>
<span class="t" id="t196" style="font-size:13px;color:#000;line-height:17px;top:405.0px;right:394.5px;transform-origin:right center;transform:scaleX(0.8570);">1</span>
<span class="t" id="t197" style="font-size:13px;color:#000;line-height:17px;top:405.0px;right:330.5px;transform-origin:right center;transform:scaleX(1.0644);">4</span>
<span class="t" id="t198" style="font-size:13px;color:#000;line-height:17px;top:425.0px;left:757.5px;transform-origin:left center;transform:scaleX(0.9800);">ХДФ_БАЗОВАЯ</span>
<span class="t" id="t199" style="font-size:13px;color:#000;line-height:17px;top:425.0px;right:522.5px;transform-origin:right center;transform:scaleX(0.9676);">716</span>
<span class="t" id="t200" style="font-size:13px;color:#000;line-height:17px;top:425.0px;right:458.5px;transform-origin:right center;transform:scaleX(0.9676);">292</span>
<span class="t" id="t201" style="font-size:13px;color:#000;line-height:17px;top:425.0px;right:394.5px;transform-origin:right center;transform:scaleX(0.8570);">1</span>
<span class="t" id="t202" style="font-size:13px;color:#000;line-height:17px;top:425.0px;right:330.5px;transform-origin:right center;transform:scaleX(1.0644);">4</span>
<span class="t" id="t203" style="font-size:13px;color:#1a2a3a;line-height:17px;top:824.0px;left:112.5px;transform-origin:left center;">Загрузка</span>
<span class="t" id="t204" style="font-size:13px;color:#fff;line-height:17px;top:824.0px;left:191.0px;transform-origin:left center;transform:scaleX(0.9840);">ЛДСП</span>
<span class="t" id="t205" style="font-size:13px;color:#fff;line-height:17px;top:824.0px;left:251.5px;transform-origin:left center;transform:scaleX(1.0946);">МДФ</span>
<span class="t" id="t206" style="font-size:13.5px;color:#217346;font-weight:700;line-height:18px;top:823.0px;left:307.9px;transform-origin:left center;transform:scaleX(1.0211);">ХДФ</span>
<span class="t" id="t207" style="font-size:13px;color:#fff;line-height:17px;top:824.0px;left:363.5px;transform-origin:left center;transform:scaleX(0.9802);">Столешница</span>
<span class="t" id="t208" style="font-size:13px;color:#fff;line-height:17px;top:824.0px;left:467.0px;transform-origin:left center;transform:scaleX(0.9418);">Фасады</span>
<span class="t" id="t209" style="font-size:13px;color:#fff;line-height:17px;top:824.0px;left:540.0px;transform-origin:left center;transform:scaleX(0.9483);">Стекло</span>
<span class="t" id="t210" style="font-size:13px;color:#fff;line-height:17px;top:824.0px;left:608.5px;transform-origin:left center;transform:scaleX(1.0608);">Погонаж</span>
<span class="t" id="t211" style="font-size:13px;color:#fff;line-height:17px;top:824.0px;left:691.0px;transform-origin:left center;transform:scaleX(0.9795);">Фурнитура</span>
<span class="t" id="t212" style="font-size:13px;color:#111;line-height:17px;top:824.0px;left:783.0px;transform-origin:left center;transform:scaleX(0.9562);">Смета</span>
<span class="t" id="t213" style="font-size:13px;color:#444;line-height:17px;top:824.0px;left:845.0px;transform-origin:left center;transform:scaleX(0.9846);">$ ЛДСП</span>
<span class="t" id="t214" style="font-size:13px;color:#444;line-height:17px;top:824.0px;left:917.1px;transform-origin:left center;transform:scaleX(1.0430);">$ МДФ</span>
<span class="t" id="t215" style="font-size:13px;color:#444;line-height:17px;top:824.0px;left:986.2px;transform-origin:left center;transform:scaleX(0.9836);">$ ХДФ</span>
<span class="t" id="t216" style="font-size:13px;color:#444;line-height:17px;top:824.0px;left:1050.0px;transform-origin:left center;transform:scaleX(1.0415);">$ Кромка</span>
<span class="t" id="t217" style="font-size:13px;color:#444;line-height:17px;top:824.0px;left:1134.1px;transform-origin:left center;transform:scaleX(0.9569);">$ Фасады</span>
<span class="t" id="t218" style="font-size:13px;color:#444;line-height:17px;top:824.0px;left:1219.0px;transform-origin:left center;transform:scaleX(0.9660);">$ Стол</span>
<span class="t" id="t219" style="font-size:12px;color:#444;line-height:16px;top:849.5px;left:1404.5px;transform-origin:left center;transform:scaleX(0.8631);">100%</span>
<span class="t" id="t220" style="font-size:12px;color:#ffffff;line-height:16px;top:9.0px;left:658.0px;transform-origin:left center;transform:scaleX(0.9442);">redcut_3.1.0.xlsm  -  Excel</span>
<span class="t" id="t221" style="font-size:12px;color:#ffffff;line-height:16px;top:8.0px;left:1094.9px;transform-origin:left center;transform:scaleX(0.9846);">Владимир Виноградов</span>
<span class="t" id="t222" style="font-size:10px;color:#6d5f68;line-height:13px;top:9.0px;left:1235.0px;transform-origin:left center;transform:scaleX(1.0492);">ВВ</span>
<span class="t" id="t223" style="font-size:12px;color:#ffffff;line-height:16px;top:41.0px;left:14.9px;transform-origin:left center;">Файл</span>
<span class="t" id="t224" style="font-size:12px;color:#217346;line-height:16px;top:41.0px;left:73.0px;transform-origin:left center;transform:scaleX(0.9674);">Главная</span>
<span class="t" id="t225" style="font-size:12px;color:#ffffff;line-height:16px;top:41.0px;left:144.0px;transform-origin:left center;transform:scaleX(0.9460);">Вставка</span>
<span class="t" id="t226" style="font-size:12px;color:#ffffff;line-height:16px;top:41.0px;left:213.0px;transform-origin:left center;transform:scaleX(0.9828);">Разметка страницы</span>
<span class="t" id="t227" style="font-size:12px;color:#ffffff;line-height:16px;top:41.0px;left:347.0px;transform-origin:left center;transform:scaleX(1.0437);">Формулы</span>
<span class="t" id="t228" style="font-size:12px;color:#ffffff;line-height:16px;top:41.0px;left:427.5px;transform-origin:left center;transform:scaleX(1.0148);">Данные</span>
<span class="t" id="t229" style="font-size:12px;color:#ffffff;line-height:16px;top:41.0px;left:497.5px;transform-origin:left center;transform:scaleX(0.9927);">Рецензирование</span>
<span class="t" id="t230" style="font-size:12px;color:#ffffff;line-height:16px;top:41.0px;left:615.8px;transform-origin:left center;transform:scaleX(0.9623);">Вид</span>
<span class="t" id="t231" style="font-size:12px;color:#ffffff;line-height:16px;top:41.0px;left:663.1px;transform-origin:left center;transform:scaleX(1.0059);">Разработчик</span>
<span class="t" id="t232" style="font-size:12px;color:#ffffff;line-height:16px;top:41.0px;left:759.5px;transform-origin:left center;transform:scaleX(0.9920);">Справка</span>
<span class="t" id="t233" style="font-size:12px;color:#ffffff;line-height:16px;top:41.0px;left:860.8px;transform-origin:left center;transform:scaleX(0.9551);">Что вы хотите сделать?</span>
<span class="t" id="t234" style="font-size:12px;color:#ffffff;line-height:16px;top:41.0px;left:1361.2px;transform-origin:left center;transform:scaleX(0.9794);">Поделиться</span>
<span class="t" id="t235" style="font-size:10.7px;color:#3c3c3c;line-height:14px;top:141.0px;letter-spacing:0.389px;left:5.0px;transform-origin:left center;">Буфер обмена</span>
<span class="t" id="t236" style="font-size:10.7px;color:#3c3c3c;line-height:14px;top:141.0px;letter-spacing:0.932px;left:183.1px;transform-origin:left center;">Шрифт</span>
<span class="t" id="t237" style="font-size:10.7px;color:#3c3c3c;line-height:14px;top:141.0px;letter-spacing:0.593px;left:456.0px;transform-origin:left center;">Выравнивание</span>
<span class="t" id="t238" style="font-size:10.7px;color:#3c3c3c;line-height:14px;top:141.0px;letter-spacing:0.312px;left:741.0px;transform-origin:left center;">Число</span>
<span class="t" id="t239" style="font-size:10.7px;color:#3c3c3c;line-height:14px;top:141.0px;letter-spacing:0.451px;left:952.5px;transform-origin:left center;">Стили</span>
<span class="t" id="t240" style="font-size:10.7px;color:#3c3c3c;line-height:14px;top:141.0px;letter-spacing:0.928px;left:1131.5px;transform-origin:left center;">Ячейки</span>
<span class="t" id="t241" style="font-size:10.7px;color:#3c3c3c;line-height:14px;top:141.0px;letter-spacing:0.544px;left:1254.5px;transform-origin:left center;">Редактирование</span>
<span class="t" id="t242" style="font-size:12px;color:#262626;line-height:16px;top:105.0px;left:10.0px;transform-origin:left center;transform:scaleX(0.9455);">Вставить</span>
<span class="t" id="t243" style="font-size:12px;color:#262626;line-height:16px;top:79.0px;left:115.0px;transform-origin:left center;transform:scaleX(0.9937);">Calibri</span>
<span class="t" id="t244" style="font-size:12px;color:#262626;line-height:16px;top:79.0px;left:218.1px;transform-origin:left center;transform:scaleX(0.9383);">11</span>
<span class="t" id="t245" style="font-size:13px;color:#333;font-weight:700;line-height:17px;top:108.5px;left:116.5px;transform-origin:left center;transform:scaleX(1.1064);">Ж</span>
<span class="t" id="t246" style="font-size:13px;color:#333;font-weight:700;font-style:italic;line-height:17px;top:108.5px;left:139.5px;transform-origin:left center;transform:scaleX(1.1250);">К</span>
<span class="t" id="t247" style="font-size:13px;color:#333;text-decoration:underline;line-height:17px;top:108.5px;left:161.5px;transform-origin:left center;transform:scaleX(1.2108);">Ч</span>
<span class="t" id="t248" style="font-size:14px;color:#4a4a4a;line-height:18px;top:78.0px;left:272.0px;transform-origin:left center;transform:scaleX(1.1023);">A</span>
<span class="t" id="t249" style="font-size:11.5px;color:#4a4a4a;line-height:15px;top:80.5px;left:294.5px;transform-origin:left center;transform:scaleX(1.1079);">A</span>
<span class="t" id="t250" style="font-size:12px;color:#262626;line-height:16px;top:79.0px;left:475.5px;transform-origin:left center;transform:scaleX(0.9933);">Переносить текст</span>
<span class="t" id="t251" style="font-size:12px;color:#262626;line-height:16px;top:110.0px;left:475.5px;transform-origin:left center;transform:scaleX(0.9852);">Объединить и поместить в центре</span>
<span class="t" id="t252" style="font-size:12px;color:#262626;line-height:16px;top:79.0px;left:702.9px;transform-origin:left center;transform:scaleX(1.0481);">Общий</span>
<span class="t" id="t253" style="font-size:16px;color:#444;line-height:21px;top:107.0px;left:739.1px;transform-origin:left center;transform:scaleX(0.9414);">%</span>
<span class="t" id="t254" style="font-size:9.6px;color:#444;line-height:12px;top:110.8px;left:759.2px;transform-origin:left center;transform:scaleX(0.9740);">000</span>
<span class="t" id="t255" style="font-size:12px;color:#262626;line-height:16px;top:105.2px;left:874.5px;transform-origin:left center;transform:scaleX(1.0267);">Условное</span>
<span class="t" id="t256" style="font-size:12px;color:#262626;line-height:16px;top:121.2px;left:849.2px;transform-origin:left center;">форматирование</span>
<span class="t" id="t257" style="font-size:12px;color:#262626;line-height:16px;top:105.2px;left:957.8px;transform-origin:left center;transform:scaleX(1.0048);">Форматировать</span>
<span class="t" id="t258" style="font-size:12px;color:#262626;line-height:16px;top:121.2px;left:965.0px;transform-origin:left center;transform:scaleX(1.0088);">как таблицу</span>
<span class="t" id="t259" style="font-size:12px;color:#262626;line-height:16px;top:105.2px;left:1053.0px;transform-origin:left center;transform:scaleX(0.9891);">Стили</span>
<span class="t" id="t260" style="font-size:12px;color:#262626;line-height:16px;top:121.2px;left:1049.5px;transform-origin:left center;transform:scaleX(1.0364);">ячеек</span>
<span class="t" id="t261" style="font-size:12px;color:#262626;line-height:16px;top:105.2px;left:1250.9px;transform-origin:left center;transform:scaleX(1.0052);">Сортировка</span>
<span class="t" id="t262" style="font-size:12px;color:#262626;line-height:16px;top:121.2px;left:1255.1px;transform-origin:left center;">и фильтр</span>
<span class="t" id="t263" style="font-size:12px;color:#262626;line-height:16px;top:105.2px;left:1330.0px;transform-origin:left center;transform:scaleX(0.9959);">Найти и</span>
<span class="t" id="t264" style="font-size:12px;color:#262626;line-height:16px;top:121.2px;left:1322.0px;transform-origin:left center;transform:scaleX(0.9696);">выделить</span>
<span class="t" id="t265" style="font-size:12px;color:#262626;line-height:16px;top:71.0px;left:1130.3px;transform-origin:left center;transform:scaleX(0.9435);">Вставить</span>
<span class="t" id="t266" style="font-size:12px;color:#262626;line-height:16px;top:94.0px;left:1130.3px;transform-origin:left center;transform:scaleX(0.9557);">Удалить</span>
<span class="t" id="t267" style="font-size:12px;color:#262626;line-height:16px;top:117.0px;left:1130.3px;transform-origin:left center;transform:scaleX(1.0131);">Формат</span>
<span class="t" id="t268" style="font-size:10.5px;color:#555;font-weight:700;line-height:14px;top:74.5px;left:458.3px;transform-origin:left center;transform:scaleX(1.0436);">ab</span>
<span class="t" id="t269" style="font-size:10.5px;color:#555;font-weight:700;line-height:14px;top:82.5px;left:458.3px;transform-origin:left center;transform:scaleX(1.0610);">c</span>
<span class="t" id="t270" style="font-size:9px;color:#444;line-height:12px;top:107.0px;left:799.0px;transform-origin:left center;">0</span>
<span class="t" id="t271" style="font-size:9px;color:#444;line-height:12px;top:114.5px;left:791.0px;transform-origin:left center;transform:scaleX(1.0787);">,00</span>
<span class="t" id="t272" style="font-size:9px;color:#444;line-height:12px;top:107.0px;left:813.5px;transform-origin:left center;transform:scaleX(1.0387);">,00</span>
<span class="t" id="t273" style="font-size:9px;color:#444;line-height:12px;top:114.5px;left:819.0px;transform-origin:left center;">,0</span>
<span class="t" id="t274" style="font-size:17px;color:#3e74b0;font-weight:700;line-height:22px;top:67.8px;left:1269.1px;transform-origin:left center;transform:scaleX(0.9282);">A</span>
<span class="t" id="t275" style="font-size:16px;color:#9a5fb0;font-weight:700;line-height:21px;top:82.7px;left:1269.7px;transform-origin:left center;transform:scaleX(0.8522);">Я</span>
</div></body></html>
